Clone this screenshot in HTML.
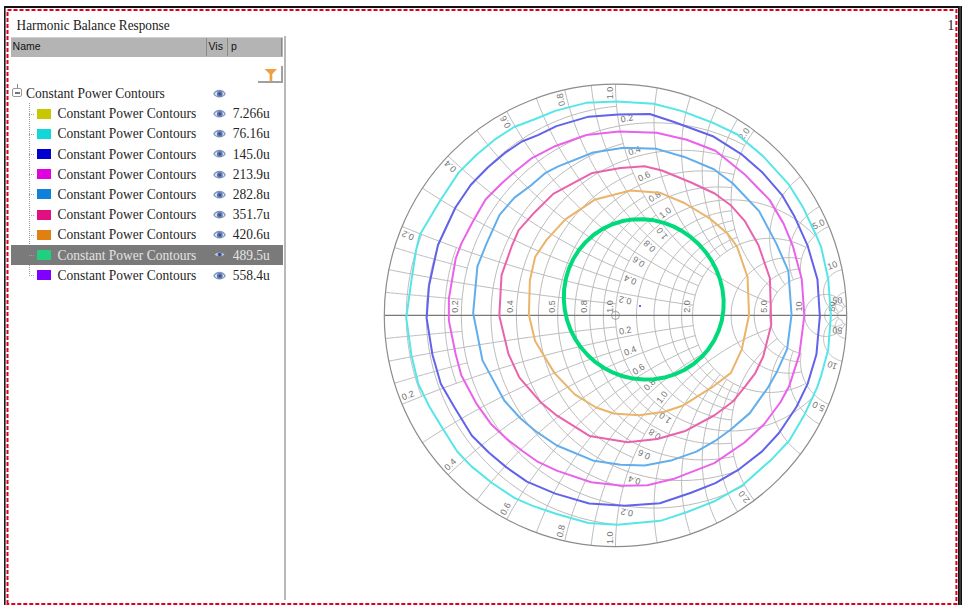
<!DOCTYPE html>
<html><head><meta charset="utf-8"><style>
html,body{margin:0;padding:0;background:#fff;width:968px;height:609px;overflow:hidden;position:relative}
.t{position:absolute;font-family:"Liberation Serif",serif;font-size:13.5px;line-height:17px;white-space:nowrap;transform:scaleY(1.15);transform-origin:0 5.6px}
</style></head><body>
<svg style="position:absolute;left:0;top:0" width="968" height="609"><rect x="4" y="6" width="958" height="2" fill="#111"/><rect x="4" y="6" width="1.6" height="599" fill="#1a1a1a"/><rect x="958" y="6" width="4" height="599" fill="#111"/><rect x="959.6" y="6" width="0.9" height="599" fill="#666"/><path d="M7.5,604 L7.5,10 L956.4,10 L956.4,604 Z" fill="none" stroke="#e0001c" stroke-width="2" stroke-dasharray="4 2"/></svg>
<div class="t" style="left:16.6px;top:15.7px;font-size:13.25px;color:#1a1a1a">Harmonic Balance Response</div>
<div class="t" style="left:947.5px;top:15.5px;font-size:13.5px;color:#1a1a1a">1</div>
<div style="position:absolute;left:11px;top:37px;width:272px;height:20px;background:#b4b4b4;border-top:1px solid #d0d0d0;box-sizing:border-box"></div>
<div style="position:absolute;left:206px;top:38px;width:1px;height:18px;background:#8a8a8a"></div>
<div style="position:absolute;left:227px;top:38px;width:1px;height:18px;background:#8a8a8a"></div>
<div style="position:absolute;left:281px;top:38px;width:1px;height:18px;background:#8a8a8a"></div>
<div style="position:absolute;left:12.6px;top:40px;font-family:'Liberation Sans',sans-serif;font-size:10.5px;line-height:13px;color:#111">Name</div>
<div style="position:absolute;left:208.5px;top:40px;font-family:'Liberation Sans',sans-serif;font-size:10.5px;line-height:13px;color:#111">Vis</div>
<div style="position:absolute;left:231px;top:40px;font-family:'Liberation Sans',sans-serif;font-size:10.5px;line-height:13px;color:#111">p</div>
<div style="position:absolute;left:284px;top:36px;width:1.5px;height:564px;background:#b8b8b8"></div>
<div style="position:absolute;left:258px;top:81px;width:24.5px;height:2px;background:#a0a0a0"></div>
<div style="position:absolute;left:280.5px;top:66px;width:2px;height:17px;background:#a0a0a0"></div>
<svg style="position:absolute;left:264px;top:68px" width="14" height="14" viewBox="0 0 14 14"><path d="M0.5,1 L13,1 L8.3,6 L8.3,13 L5.6,13 L5.6,6 Z" fill="#f0a040"/></svg>
<div style="position:absolute;left:17px;top:84px;width:0;height:4px;border-left:1px solid #888"></div>
<div style="position:absolute;left:12px;top:88.3px;width:9.5px;height:9.2px;border:1px solid #999;border-radius:2px;box-sizing:border-box"></div>
<div style="position:absolute;left:14.5px;top:92.4px;width:5px;height:1.2px;background:#777"></div>
<svg style="position:absolute;left:29px;top:103px" width="1" height="173"><line x1="0.5" y1="0" x2="0.5" y2="173" stroke="#9a9a9a" stroke-width="1" stroke-dasharray="1 1"/></svg>
<div class="t" style="left:26px;top:84.2px;color:#262626">Constant Power Contours</div>
<div style="position:absolute;left:213px;top:88.8px;line-height:0"><svg width="13" height="9" viewBox="0 0 13 9"><path d="M0.2,5 C2.5,-0.6 10.5,-0.6 12.8,5 C10.5,9.6 2.5,9.6 0.2,5 Z" fill="#8196c2"/><path d="M1.6,5 C3.5,1.4 9.5,1.4 11.4,5 C9.5,8.2 3.5,8.2 1.6,5 Z" fill="#e2e8f2"/><circle cx="6.8" cy="4.9" r="2.9" fill="#6078b0"/><circle cx="6.8" cy="5" r="1.3" fill="#34508a"/></svg></div>
<svg style="position:absolute;left:29px;top:113.5px" width="6" height="1"><line x1="0" y1="0.5" x2="6" y2="0.5" stroke="#a0a0a0" stroke-width="1" stroke-dasharray="1 1"/></svg><div style="position:absolute;left:37px;top:108.5px;width:14px;height:10px;background:#c8c800"></div><div class="t" style="left:57.4px;top:104.2px;color:#262626">Constant Power Contours</div><div style="position:absolute;left:213px;top:109.0px;line-height:0"><svg width="13" height="9" viewBox="0 0 13 9"><path d="M0.2,5 C2.5,-0.6 10.5,-0.6 12.8,5 C10.5,9.6 2.5,9.6 0.2,5 Z" fill="#8196c2"/><path d="M1.6,5 C3.5,1.4 9.5,1.4 11.4,5 C9.5,8.2 3.5,8.2 1.6,5 Z" fill="#e2e8f2"/><circle cx="6.8" cy="4.9" r="2.9" fill="#6078b0"/><circle cx="6.8" cy="5" r="1.3" fill="#34508a"/></svg></div><div class="t" style="left:232.7px;top:104.2px;color:#262626">7.266u</div><svg style="position:absolute;left:29px;top:133.7px" width="6" height="1"><line x1="0" y1="0.5" x2="6" y2="0.5" stroke="#a0a0a0" stroke-width="1" stroke-dasharray="1 1"/></svg><div style="position:absolute;left:37px;top:128.7px;width:14px;height:10px;background:#10d8d8"></div><div class="t" style="left:57.4px;top:124.4px;color:#262626">Constant Power Contours</div><div style="position:absolute;left:213px;top:129.2px;line-height:0"><svg width="13" height="9" viewBox="0 0 13 9"><path d="M0.2,5 C2.5,-0.6 10.5,-0.6 12.8,5 C10.5,9.6 2.5,9.6 0.2,5 Z" fill="#8196c2"/><path d="M1.6,5 C3.5,1.4 9.5,1.4 11.4,5 C9.5,8.2 3.5,8.2 1.6,5 Z" fill="#e2e8f2"/><circle cx="6.8" cy="4.9" r="2.9" fill="#6078b0"/><circle cx="6.8" cy="5" r="1.3" fill="#34508a"/></svg></div><div class="t" style="left:232.7px;top:124.4px;color:#262626">76.16u</div><svg style="position:absolute;left:29px;top:153.9px" width="6" height="1"><line x1="0" y1="0.5" x2="6" y2="0.5" stroke="#a0a0a0" stroke-width="1" stroke-dasharray="1 1"/></svg><div style="position:absolute;left:37px;top:148.9px;width:14px;height:10px;background:#0000d0"></div><div class="t" style="left:57.4px;top:144.6px;color:#262626">Constant Power Contours</div><div style="position:absolute;left:213px;top:149.4px;line-height:0"><svg width="13" height="9" viewBox="0 0 13 9"><path d="M0.2,5 C2.5,-0.6 10.5,-0.6 12.8,5 C10.5,9.6 2.5,9.6 0.2,5 Z" fill="#8196c2"/><path d="M1.6,5 C3.5,1.4 9.5,1.4 11.4,5 C9.5,8.2 3.5,8.2 1.6,5 Z" fill="#e2e8f2"/><circle cx="6.8" cy="4.9" r="2.9" fill="#6078b0"/><circle cx="6.8" cy="5" r="1.3" fill="#34508a"/></svg></div><div class="t" style="left:232.7px;top:144.6px;color:#262626">145.0u</div><svg style="position:absolute;left:29px;top:174.1px" width="6" height="1"><line x1="0" y1="0.5" x2="6" y2="0.5" stroke="#a0a0a0" stroke-width="1" stroke-dasharray="1 1"/></svg><div style="position:absolute;left:37px;top:169.1px;width:14px;height:10px;background:#e000e0"></div><div class="t" style="left:57.4px;top:164.8px;color:#262626">Constant Power Contours</div><div style="position:absolute;left:213px;top:169.6px;line-height:0"><svg width="13" height="9" viewBox="0 0 13 9"><path d="M0.2,5 C2.5,-0.6 10.5,-0.6 12.8,5 C10.5,9.6 2.5,9.6 0.2,5 Z" fill="#8196c2"/><path d="M1.6,5 C3.5,1.4 9.5,1.4 11.4,5 C9.5,8.2 3.5,8.2 1.6,5 Z" fill="#e2e8f2"/><circle cx="6.8" cy="4.9" r="2.9" fill="#6078b0"/><circle cx="6.8" cy="5" r="1.3" fill="#34508a"/></svg></div><div class="t" style="left:232.7px;top:164.8px;color:#262626">213.9u</div><svg style="position:absolute;left:29px;top:194.3px" width="6" height="1"><line x1="0" y1="0.5" x2="6" y2="0.5" stroke="#a0a0a0" stroke-width="1" stroke-dasharray="1 1"/></svg><div style="position:absolute;left:37px;top:189.3px;width:14px;height:10px;background:#1080d8"></div><div class="t" style="left:57.4px;top:185.0px;color:#262626">Constant Power Contours</div><div style="position:absolute;left:213px;top:189.8px;line-height:0"><svg width="13" height="9" viewBox="0 0 13 9"><path d="M0.2,5 C2.5,-0.6 10.5,-0.6 12.8,5 C10.5,9.6 2.5,9.6 0.2,5 Z" fill="#8196c2"/><path d="M1.6,5 C3.5,1.4 9.5,1.4 11.4,5 C9.5,8.2 3.5,8.2 1.6,5 Z" fill="#e2e8f2"/><circle cx="6.8" cy="4.9" r="2.9" fill="#6078b0"/><circle cx="6.8" cy="5" r="1.3" fill="#34508a"/></svg></div><div class="t" style="left:232.7px;top:185.0px;color:#262626">282.8u</div><svg style="position:absolute;left:29px;top:214.5px" width="6" height="1"><line x1="0" y1="0.5" x2="6" y2="0.5" stroke="#a0a0a0" stroke-width="1" stroke-dasharray="1 1"/></svg><div style="position:absolute;left:37px;top:209.5px;width:14px;height:10px;background:#e01080"></div><div class="t" style="left:57.4px;top:205.2px;color:#262626">Constant Power Contours</div><div style="position:absolute;left:213px;top:210.0px;line-height:0"><svg width="13" height="9" viewBox="0 0 13 9"><path d="M0.2,5 C2.5,-0.6 10.5,-0.6 12.8,5 C10.5,9.6 2.5,9.6 0.2,5 Z" fill="#8196c2"/><path d="M1.6,5 C3.5,1.4 9.5,1.4 11.4,5 C9.5,8.2 3.5,8.2 1.6,5 Z" fill="#e2e8f2"/><circle cx="6.8" cy="4.9" r="2.9" fill="#6078b0"/><circle cx="6.8" cy="5" r="1.3" fill="#34508a"/></svg></div><div class="t" style="left:232.7px;top:205.2px;color:#262626">351.7u</div><svg style="position:absolute;left:29px;top:234.7px" width="6" height="1"><line x1="0" y1="0.5" x2="6" y2="0.5" stroke="#a0a0a0" stroke-width="1" stroke-dasharray="1 1"/></svg><div style="position:absolute;left:37px;top:229.7px;width:14px;height:10px;background:#e08010"></div><div class="t" style="left:57.4px;top:225.4px;color:#262626">Constant Power Contours</div><div style="position:absolute;left:213px;top:230.2px;line-height:0"><svg width="13" height="9" viewBox="0 0 13 9"><path d="M0.2,5 C2.5,-0.6 10.5,-0.6 12.8,5 C10.5,9.6 2.5,9.6 0.2,5 Z" fill="#8196c2"/><path d="M1.6,5 C3.5,1.4 9.5,1.4 11.4,5 C9.5,8.2 3.5,8.2 1.6,5 Z" fill="#e2e8f2"/><circle cx="6.8" cy="4.9" r="2.9" fill="#6078b0"/><circle cx="6.8" cy="5" r="1.3" fill="#34508a"/></svg></div><div class="t" style="left:232.7px;top:225.4px;color:#262626">420.6u</div><div style="position:absolute;left:11px;top:245.4px;width:272px;height:19.6px;background:#7a7a7a"></div><svg style="position:absolute;left:29px;top:254.9px" width="6" height="1"><line x1="0" y1="0.5" x2="6" y2="0.5" stroke="#a0a0a0" stroke-width="1" stroke-dasharray="1 1"/></svg><div style="position:absolute;left:37px;top:249.9px;width:14px;height:10px;background:#20d080"></div><div class="t" style="left:57.4px;top:245.6px;color:#e4e4e4">Constant Power Contours</div><div style="position:absolute;left:213px;top:250.4px;line-height:0"><svg width="13" height="9" viewBox="0 0 13 9"><path d="M1.5,4.6 Q6.5,0.6 11.5,4.6 Q6.5,8.6 1.5,4.6 Z" fill="#c9d2e2"/><circle cx="6.7" cy="4.6" r="2.2" fill="#4c68a8"/><circle cx="6.7" cy="4.6" r="1" fill="#2c4680"/></svg></div><div class="t" style="left:232.7px;top:245.6px;color:#e4e4e4">489.5u</div><svg style="position:absolute;left:29px;top:275.1px" width="6" height="1"><line x1="0" y1="0.5" x2="6" y2="0.5" stroke="#a0a0a0" stroke-width="1" stroke-dasharray="1 1"/></svg><div style="position:absolute;left:37px;top:270.1px;width:14px;height:10px;background:#8000ff"></div><div class="t" style="left:57.4px;top:265.8px;color:#262626">Constant Power Contours</div><div style="position:absolute;left:213px;top:270.6px;line-height:0"><svg width="13" height="9" viewBox="0 0 13 9"><path d="M0.2,5 C2.5,-0.6 10.5,-0.6 12.8,5 C10.5,9.6 2.5,9.6 0.2,5 Z" fill="#8196c2"/><path d="M1.6,5 C3.5,1.4 9.5,1.4 11.4,5 C9.5,8.2 3.5,8.2 1.6,5 Z" fill="#e2e8f2"/><circle cx="6.8" cy="4.9" r="2.9" fill="#6078b0"/><circle cx="6.8" cy="5" r="1.3" fill="#34508a"/></svg></div><div class="t" style="left:232.7px;top:265.8px;color:#262626">558.4u</div>
<svg width="968" height="609" viewBox="0 0 968 609" style="position:absolute;left:0;top:0">
<g fill="none" stroke="#bcbcbc" stroke-width="1"><path d="M421.74,234.45 L420.98,236.39 L420.25,238.32 L419.53,240.27 L418.84,242.22 L418.16,244.18 L417.50,246.14 L416.85,248.11 L416.23,250.09 L415.62,252.07 L415.04,254.06 L414.47,256.05 L413.92,258.05 L413.39,260.05 L412.88,262.06 L412.39,264.07 L411.91,266.09 L411.46,268.11 L411.02,270.14 L410.61,272.17 L410.21,274.20 L409.83,276.24 L409.47,278.28 L409.13,280.32 L408.81,282.37 L408.51,284.42 L408.23,286.47 L407.96,288.53 L407.72,290.59 L407.50,292.65 L407.29,294.71 L407.11,296.77 L406.94,298.84 L406.80,300.90 L406.67,302.97 L406.56,305.04 L406.48,307.11 L406.41,309.18 L406.36,311.26 L406.33,313.33 L406.32,315.40 L406.33,317.47 L406.36,319.54 L406.41,321.62 L406.48,323.69 L406.56,325.76 L406.67,327.83 L406.80,329.90 L406.94,331.96 L407.11,334.03 L407.29,336.09 L407.50,338.15 L407.72,340.21 L407.96,342.27 L408.23,344.33 L408.51,346.38 L408.81,348.43 L409.13,350.48 L409.47,352.52 L409.83,354.56 L410.21,356.60 L410.61,358.63 L411.02,360.66 L411.46,362.69 L411.91,364.71 L412.39,366.73 L412.88,368.74 L413.39,370.75 L413.92,372.75 L414.47,374.75 L415.04,376.74 L415.62,378.73 L416.23,380.71 L416.85,382.69 L417.50,384.66 L418.16,386.62 L418.84,388.58 L419.53,390.53 L420.25,392.48 L420.98,394.41 L421.74,396.35"/><path d="M385.45,292.34 L386.73,292.47 L388.00,292.59 L389.28,292.72 L390.55,292.85 L391.83,292.97 L393.11,293.10 L394.38,293.22 L395.66,293.35 L396.93,293.47 L398.21,293.60 L399.48,293.72 L400.76,293.85 L402.04,293.97 L403.31,294.09 L404.59,294.22 L405.86,294.34 L407.14,294.46 L408.42,294.58 L409.69,294.70 L410.97,294.82 L412.24,294.94 L413.52,295.06 L414.80,295.18 L416.07,295.30 L417.35,295.42 L418.62,295.54 L419.90,295.66 L421.18,295.78 L422.45,295.90 L423.73,296.01 L425.01,296.13 L426.28,296.25 L427.56,296.36 L428.83,296.48 L430.11,296.60 L431.39,296.71 L432.66,296.83 L433.94,296.94 L435.22,297.06 L436.49,297.17 L437.77,297.28 L439.05,297.40 L440.32,297.51 L441.60,297.62 L442.88,297.73 L444.16,297.84 L445.43,297.96 L446.71,298.07 L447.99,298.18 L449.26,298.29 L450.54,298.40 L451.82,298.51 L453.09,298.62 L454.37,298.73 L455.65,298.83 L456.93,298.94 L458.20,299.05 L459.48,299.16 L460.76,299.27 L462.03,299.37"/><path d="M385.45,338.46 L386.73,338.33 L388.00,338.21 L389.28,338.08 L390.55,337.95 L391.83,337.83 L393.11,337.70 L394.38,337.58 L395.66,337.45 L396.93,337.33 L398.21,337.20 L399.48,337.08 L400.76,336.95 L402.04,336.83 L403.31,336.71 L404.59,336.58 L405.86,336.46 L407.14,336.34 L408.42,336.22 L409.69,336.10 L410.97,335.98 L412.24,335.86 L413.52,335.74 L414.80,335.62 L416.07,335.50 L417.35,335.38 L418.62,335.26 L419.90,335.14 L421.18,335.02 L422.45,334.90 L423.73,334.79 L425.01,334.67 L426.28,334.55 L427.56,334.44 L428.83,334.32 L430.11,334.20 L431.39,334.09 L432.66,333.97 L433.94,333.86 L435.22,333.74 L436.49,333.63 L437.77,333.52 L439.05,333.40 L440.32,333.29 L441.60,333.18 L442.88,333.07 L444.16,332.96 L445.43,332.84 L446.71,332.73 L447.99,332.62 L449.26,332.51 L450.54,332.40 L451.82,332.29 L453.09,332.18 L454.37,332.07 L455.65,331.97 L456.93,331.86 L458.20,331.75 L459.48,331.64 L460.76,331.53 L462.03,331.43"/><path d="M616.55,106.17 L608.84,107.05 L601.18,108.21 L593.56,109.66 L586.00,111.38 L578.51,113.38 L571.10,115.66 L563.78,118.21 L556.55,121.02 L549.44,124.11 L542.44,127.45 L535.57,131.05 L528.84,134.89 L522.26,138.99 L515.83,143.32 L509.57,147.89 L503.47,152.69 L497.56,157.70 L491.84,162.94 L486.32,168.38 L481.00,174.02 L475.89,179.85 L471.00,185.87 L466.33,192.06 L461.90,198.42 L457.70,204.94 L453.75,211.61 L450.05,218.42 L446.60,225.36 L443.41,232.43 L440.48,239.61 L437.82,246.89 L435.42,254.27 L433.31,261.72 L431.46,269.26 L429.90,276.85 L428.62,284.50 L427.62,292.19 L426.91,299.91 L426.48,307.65 L426.34,315.40 L426.48,323.15 L426.91,330.89 L427.62,338.61 L428.62,346.30 L429.90,353.95 L431.46,361.54 L433.31,369.08 L435.42,376.53 L437.82,383.91 L440.48,391.19 L443.41,398.37 L446.60,405.44 L450.05,412.38 L453.75,419.19 L457.70,425.86 L461.90,432.38 L466.33,438.74 L471.00,444.93 L475.89,450.95 L481.00,456.78 L486.32,462.42 L491.84,467.86 L497.56,473.10 L503.47,478.11 L509.57,482.91 L515.83,487.48 L522.26,491.81 L528.84,495.91 L535.57,499.75 L542.44,503.35 L549.44,506.69 L556.55,509.78 L563.78,512.59 L571.10,515.14 L578.51,517.42 L586.00,519.42 L593.56,521.14 L601.18,522.59 L608.84,523.75 L616.55,524.63"/><path d="M388.88,269.62 L392.63,270.37 L396.39,271.12 L400.15,271.87 L403.91,272.60 L407.67,273.33 L411.43,274.06 L415.19,274.78 L418.96,275.49 L422.72,276.19 L426.49,276.89 L430.26,277.59 L434.03,278.27 L437.80,278.95 L441.57,279.63 L445.34,280.30 L449.11,280.96 L452.89,281.61 L456.66,282.26 L460.44,282.91 L464.22,283.54 L468.00,284.17 L471.78,284.80 L475.56,285.42 L479.34,286.03 L483.12,286.63 L486.91,287.23 L490.69,287.83 L494.48,288.41 L498.26,288.99 L502.05,289.57 L505.84,290.14 L509.63,290.70 L513.42,291.25 L517.21,291.80 L521.00,292.34 L524.80,292.88 L528.59,293.41 L532.39,293.94 L536.18,294.45 L539.98,294.96 L543.78,295.47 L547.58,295.97 L551.37,296.46 L555.17,296.95 L558.98,297.43 L562.78,297.90 L566.58,298.37 L570.38,298.83 L574.19,299.28 L577.99,299.73 L581.80,300.17 L585.60,300.61 L589.41,301.04 L593.22,301.46 L597.03,301.88 L600.83,302.29 L604.64,302.69 L608.45,303.09 L612.26,303.48 L616.08,303.87"/><path d="M388.88,361.18 L392.63,360.43 L396.39,359.68 L400.15,358.93 L403.91,358.20 L407.67,357.47 L411.43,356.74 L415.19,356.02 L418.96,355.31 L422.72,354.61 L426.49,353.91 L430.26,353.21 L434.03,352.53 L437.80,351.85 L441.57,351.17 L445.34,350.50 L449.11,349.84 L452.89,349.19 L456.66,348.54 L460.44,347.89 L464.22,347.26 L468.00,346.63 L471.78,346.00 L475.56,345.38 L479.34,344.77 L483.12,344.17 L486.91,343.57 L490.69,342.97 L494.48,342.39 L498.26,341.81 L502.05,341.23 L505.84,340.66 L509.63,340.10 L513.42,339.55 L517.21,339.00 L521.00,338.46 L524.80,337.92 L528.59,337.39 L532.39,336.86 L536.18,336.35 L539.98,335.84 L543.78,335.33 L547.58,334.83 L551.37,334.34 L555.17,333.85 L558.98,333.37 L562.78,332.90 L566.58,332.43 L570.38,331.97 L574.19,331.52 L577.99,331.07 L581.80,330.63 L585.60,330.19 L589.41,329.76 L593.22,329.34 L597.03,328.92 L600.83,328.51 L604.64,328.11 L608.45,327.71 L612.26,327.32 L616.08,326.93"/><path d="M456.42,247.52 L455.84,249.16 L455.28,250.79 L454.73,252.43 L454.19,254.08 L453.67,255.73 L453.17,257.39 L452.67,259.05 L452.19,260.71 L451.73,262.38 L451.28,264.05 L450.85,265.72 L450.43,267.40 L450.02,269.09 L449.63,270.77 L449.25,272.46 L448.89,274.15 L448.54,275.85 L448.21,277.55 L447.89,279.25 L447.59,280.95 L447.30,282.66 L447.02,284.37 L446.76,286.08 L446.52,287.79 L446.29,289.51 L446.07,291.23 L445.87,292.95 L445.69,294.67 L445.51,296.39 L445.36,298.11 L445.22,299.84 L445.09,301.56 L444.98,303.29 L444.88,305.02 L444.80,306.75 L444.73,308.48 L444.68,310.21 L444.64,311.94 L444.62,313.67 L444.61,315.40 L444.62,317.13 L444.64,318.86 L444.68,320.59 L444.73,322.32 L444.80,324.05 L444.88,325.78 L444.98,327.51 L445.09,329.24 L445.22,330.96 L445.36,332.69 L445.51,334.41 L445.69,336.13 L445.87,337.85 L446.07,339.57 L446.29,341.29 L446.52,343.01 L446.76,344.72 L447.02,346.43 L447.30,348.14 L447.59,349.85 L447.89,351.55 L448.21,353.25 L448.54,354.95 L448.89,356.65 L449.25,358.34 L449.63,360.03 L450.02,361.71 L450.43,363.40 L450.85,365.08 L451.28,366.75 L451.73,368.42 L452.19,370.09 L452.67,371.75 L453.17,373.41 L453.67,375.07 L454.19,376.72 L454.73,378.37 L455.28,380.01 L455.84,381.64 L456.42,383.28"/><path d="M394.48,247.57 L395.68,247.94 L396.89,248.30 L398.09,248.67 L399.30,249.04 L400.50,249.40 L401.71,249.77 L402.92,250.13 L404.13,250.49 L405.33,250.85 L406.54,251.22 L407.75,251.57 L408.96,251.93 L410.17,252.29 L411.38,252.65 L412.58,253.00 L413.79,253.36 L415.00,253.71 L416.21,254.06 L417.43,254.42 L418.64,254.77 L419.85,255.12 L421.06,255.46 L422.27,255.81 L423.48,256.16 L424.69,256.50 L425.91,256.85 L427.12,257.19 L428.33,257.53 L429.55,257.88 L430.76,258.22 L431.97,258.56 L433.19,258.90 L434.40,259.23 L435.62,259.57 L436.83,259.91 L438.05,260.24 L439.26,260.57 L440.48,260.91 L441.70,261.24 L442.91,261.57 L444.13,261.90 L445.35,262.23 L446.56,262.56 L447.78,262.88 L449.00,263.21 L450.22,263.53 L451.43,263.86 L452.65,264.18 L453.87,264.50 L455.09,264.82 L456.31,265.14 L457.53,265.46 L458.75,265.78 L459.97,266.09 L461.19,266.41 L462.41,266.73 L463.63,267.04 L464.85,267.35 L466.07,267.66 L467.29,267.97"/><path d="M394.48,383.23 L395.68,382.86 L396.89,382.50 L398.09,382.13 L399.30,381.76 L400.50,381.40 L401.71,381.03 L402.92,380.67 L404.13,380.31 L405.33,379.95 L406.54,379.58 L407.75,379.23 L408.96,378.87 L410.17,378.51 L411.38,378.15 L412.58,377.80 L413.79,377.44 L415.00,377.09 L416.21,376.74 L417.43,376.38 L418.64,376.03 L419.85,375.68 L421.06,375.34 L422.27,374.99 L423.48,374.64 L424.69,374.30 L425.91,373.95 L427.12,373.61 L428.33,373.27 L429.55,372.92 L430.76,372.58 L431.97,372.24 L433.19,371.90 L434.40,371.57 L435.62,371.23 L436.83,370.89 L438.05,370.56 L439.26,370.23 L440.48,369.89 L441.70,369.56 L442.91,369.23 L444.13,368.90 L445.35,368.57 L446.56,368.24 L447.78,367.92 L449.00,367.59 L450.22,367.27 L451.43,366.94 L452.65,366.62 L453.87,366.30 L455.09,365.98 L456.31,365.66 L457.53,365.34 L458.75,365.02 L459.97,364.71 L461.19,364.39 L462.41,364.07 L463.63,363.76 L464.85,363.45 L466.07,363.14 L467.29,362.83"/><path d="M744.70,145.40 L735.83,140.96 L726.73,136.98 L717.45,133.47 L708.00,130.44 L698.40,127.91 L688.69,125.88 L678.88,124.34 L669.01,123.32 L659.10,122.80 L649.17,122.79 L639.26,123.30 L629.39,124.32 L619.58,125.84 L609.86,127.86 L600.27,130.39 L590.81,133.40 L581.52,136.90 L572.43,140.87 L563.55,145.30 L554.91,150.19 L546.53,155.51 L538.44,161.26 L530.66,167.42 L523.20,173.97 L516.09,180.89 L509.35,188.18 L502.99,195.80 L497.03,203.73 L491.49,211.97 L486.37,220.47 L481.71,229.23 L477.50,238.22 L473.76,247.41 L470.50,256.79 L467.72,266.32 L465.44,275.98 L463.66,285.74 L462.39,295.58 L461.62,305.48 L461.37,315.40 L461.62,325.32 L462.39,335.22 L463.66,345.06 L465.44,354.82 L467.72,364.48 L470.50,374.01 L473.76,383.39 L477.50,392.58 L481.71,401.57 L486.37,410.33 L491.49,418.83 L497.03,427.07 L502.99,435.00 L509.35,442.62 L516.09,449.91 L523.20,456.83 L530.66,463.38 L538.44,469.54 L546.53,475.29 L554.91,480.61 L563.55,485.50 L572.43,489.93 L581.52,493.90 L590.81,497.40 L600.27,500.41 L609.86,502.94 L619.58,504.96 L629.39,506.48 L639.26,507.50 L649.17,508.01 L659.10,508.00 L669.01,507.48 L678.88,506.46 L688.69,504.92 L698.40,502.89 L708.00,500.36 L717.45,497.33 L726.73,493.82 L735.83,489.84 L744.70,485.40"/><path d="M402.08,226.48 L406.74,228.41 L411.41,230.31 L416.08,232.20 L420.77,234.07 L425.46,235.92 L430.15,237.74 L434.86,239.55 L439.58,241.34 L444.30,243.10 L449.03,244.85 L453.76,246.57 L458.51,248.27 L463.26,249.96 L468.02,251.62 L472.79,253.26 L477.56,254.88 L482.34,256.48 L487.13,258.06 L491.92,259.61 L496.73,261.15 L501.53,262.67 L506.35,264.16 L511.17,265.63 L516.00,267.09 L520.83,268.52 L525.67,269.93 L530.52,271.32 L535.37,272.69 L540.23,274.03 L545.09,275.36 L549.96,276.66 L554.83,277.95 L559.71,279.21 L564.60,280.45 L569.49,281.67 L574.39,282.87 L579.29,284.05 L584.20,285.20 L589.11,286.34 L594.03,287.45 L598.95,288.54 L603.87,289.61 L608.81,290.66 L613.74,291.68 L618.68,292.69 L623.63,293.67 L628.57,294.63 L633.53,295.57 L638.48,296.49 L643.44,297.39 L648.41,298.27 L653.38,299.12 L658.35,299.95 L663.33,300.76 L668.30,301.55 L673.29,302.32 L678.27,303.06 L683.26,303.79 L688.25,304.49 L693.25,305.17"/><path d="M402.08,404.32 L406.74,402.39 L411.41,400.49 L416.08,398.60 L420.77,396.73 L425.46,394.88 L430.15,393.06 L434.86,391.25 L439.58,389.46 L444.30,387.70 L449.03,385.95 L453.76,384.23 L458.51,382.53 L463.26,380.84 L468.02,379.18 L472.79,377.54 L477.56,375.92 L482.34,374.32 L487.13,372.74 L491.92,371.19 L496.73,369.65 L501.53,368.13 L506.35,366.64 L511.17,365.17 L516.00,363.71 L520.83,362.28 L525.67,360.87 L530.52,359.48 L535.37,358.11 L540.23,356.77 L545.09,355.44 L549.96,354.14 L554.83,352.85 L559.71,351.59 L564.60,350.35 L569.49,349.13 L574.39,347.93 L579.29,346.75 L584.20,345.60 L589.11,344.46 L594.03,343.35 L598.95,342.26 L603.87,341.19 L608.81,340.14 L613.74,339.12 L618.68,338.11 L623.63,337.13 L628.57,336.17 L633.53,335.23 L638.48,334.31 L643.44,333.41 L648.41,332.53 L653.38,331.68 L658.35,330.85 L663.33,330.04 L668.30,329.25 L673.29,328.48 L678.27,327.74 L683.26,327.01 L688.25,326.31 L693.25,325.63"/><path d="M623.24,143.50 L617.63,145.09 L612.07,146.86 L606.58,148.81 L601.15,150.95 L595.80,153.25 L590.52,155.73 L585.33,158.39 L580.23,161.21 L575.22,164.20 L570.31,167.35 L565.51,170.66 L560.82,174.12 L556.25,177.74 L551.80,181.51 L547.47,185.41 L543.28,189.46 L539.22,193.65 L535.30,197.96 L531.52,202.40 L527.89,206.97 L524.41,211.64 L521.09,216.43 L517.92,221.33 L514.92,226.33 L512.08,231.42 L509.41,236.61 L506.92,241.88 L504.59,247.22 L502.45,252.64 L500.48,258.13 L498.69,263.68 L497.09,269.29 L495.67,274.94 L494.44,280.64 L493.39,286.38 L492.53,292.14 L491.87,297.94 L491.39,303.75 L491.10,309.57 L491.01,315.40 L491.10,321.23 L491.39,327.05 L491.87,332.86 L492.53,338.66 L493.39,344.42 L494.44,350.16 L495.67,355.86 L497.09,361.51 L498.69,367.12 L500.48,372.67 L502.45,378.16 L504.59,383.58 L506.92,388.92 L509.41,394.19 L512.08,399.38 L514.92,404.47 L517.92,409.47 L521.09,414.37 L524.41,419.16 L527.89,423.83 L531.52,428.40 L535.30,432.84 L539.22,437.15 L543.28,441.34 L547.47,445.39 L551.80,449.29 L556.25,453.06 L560.82,456.68 L565.51,460.14 L570.31,463.45 L575.22,466.60 L580.23,469.59 L585.33,472.41 L590.52,475.07 L595.80,477.55 L601.15,479.85 L606.58,481.99 L612.07,483.94 L617.63,485.71 L623.24,487.30"/><path d="M422.48,188.13 L425.54,190.14 L428.61,192.14 L431.70,194.12 L434.79,196.08 L437.89,198.03 L441.00,199.97 L444.11,201.89 L447.24,203.79 L450.38,205.68 L453.52,207.56 L456.68,209.42 L459.84,211.27 L463.01,213.10 L466.19,214.91 L469.38,216.71 L472.58,218.50 L475.79,220.27 L479.00,222.03 L482.22,223.76 L485.45,225.49 L488.69,227.20 L491.94,228.89 L495.20,230.57 L498.46,232.23 L501.73,233.88 L505.01,235.51 L508.30,237.13 L511.59,238.73 L514.89,240.31 L518.20,241.88 L521.52,243.43 L524.84,244.97 L528.17,246.49 L531.51,248.00 L534.86,249.49 L538.21,250.96 L541.57,252.42 L544.94,253.86 L548.31,255.29 L551.69,256.70 L555.08,258.09 L558.47,259.47 L561.87,260.83 L565.28,262.18 L568.69,263.51 L572.11,264.82 L575.53,266.12 L578.96,267.40 L582.40,268.66 L585.84,269.91 L589.29,271.14 L592.75,272.36 L596.21,273.56 L599.68,274.74 L603.15,275.90 L606.62,277.05 L610.11,278.18 L613.60,279.30 L617.09,280.40 L620.59,281.48"/><path d="M422.48,442.67 L425.54,440.66 L428.61,438.66 L431.70,436.68 L434.79,434.72 L437.89,432.77 L441.00,430.83 L444.11,428.91 L447.24,427.01 L450.38,425.12 L453.52,423.24 L456.68,421.38 L459.84,419.53 L463.01,417.70 L466.19,415.89 L469.38,414.09 L472.58,412.30 L475.79,410.53 L479.00,408.77 L482.22,407.04 L485.45,405.31 L488.69,403.60 L491.94,401.91 L495.20,400.23 L498.46,398.57 L501.73,396.92 L505.01,395.29 L508.30,393.67 L511.59,392.07 L514.89,390.49 L518.20,388.92 L521.52,387.37 L524.84,385.83 L528.17,384.31 L531.51,382.80 L534.86,381.31 L538.21,379.84 L541.57,378.38 L544.94,376.94 L548.31,375.51 L551.69,374.10 L555.08,372.71 L558.47,371.33 L561.87,369.97 L565.28,368.62 L568.69,367.29 L572.11,365.98 L575.53,364.68 L578.96,363.40 L582.40,362.14 L585.84,360.89 L589.29,359.66 L592.75,358.44 L596.21,357.24 L599.68,356.06 L603.15,354.90 L606.62,353.75 L610.11,352.62 L613.60,351.50 L617.09,350.40 L620.59,349.32"/><path d="M738.08,160.23 L730.57,157.70 L722.95,155.53 L715.23,153.73 L707.43,152.30 L699.58,151.24 L691.68,150.57 L683.76,150.27 L675.83,150.36 L667.92,150.82 L660.04,151.67 L652.20,152.89 L644.44,154.48 L636.76,156.45 L629.18,158.78 L621.73,161.48 L614.41,164.52 L607.25,167.92 L600.26,171.65 L593.45,175.72 L586.85,180.11 L580.47,184.81 L574.32,189.81 L568.42,195.10 L562.78,200.67 L557.41,206.50 L552.33,212.58 L547.54,218.90 L543.06,225.45 L538.91,232.19 L535.08,239.14 L531.59,246.25 L528.44,253.53 L525.65,260.95 L523.22,268.49 L521.15,276.14 L519.45,283.88 L518.12,291.70 L517.17,299.57 L516.60,307.48 L516.41,315.40 L516.60,323.32 L517.17,331.23 L518.12,339.10 L519.45,346.92 L521.15,354.66 L523.22,362.31 L525.65,369.85 L528.44,377.27 L531.59,384.55 L535.08,391.66 L538.91,398.61 L543.06,405.35 L547.54,411.90 L552.33,418.22 L557.41,424.30 L562.78,430.13 L568.42,435.70 L574.32,440.99 L580.47,445.99 L586.85,450.69 L593.45,455.08 L600.26,459.15 L607.25,462.88 L614.41,466.28 L621.73,469.32 L629.18,472.02 L636.76,474.35 L644.44,476.32 L652.20,477.91 L660.04,479.13 L667.92,479.98 L675.83,480.44 L683.76,480.53 L691.68,480.23 L699.58,479.56 L707.43,478.50 L715.23,477.07 L722.95,475.27 L730.57,473.10 L738.08,470.57"/><path d="M448.08,155.95 L451.55,159.23 L455.05,162.48 L458.58,165.71 L462.13,168.90 L465.71,172.06 L469.32,175.20 L472.95,178.30 L476.61,181.38 L480.29,184.42 L483.99,187.43 L487.73,190.41 L491.48,193.37 L495.26,196.29 L499.07,199.18 L502.90,202.03 L506.75,204.86 L510.62,207.65 L514.52,210.41 L518.44,213.14 L522.39,215.84 L526.35,218.50 L530.34,221.14 L534.35,223.73 L538.38,226.30 L542.43,228.83 L546.50,231.33 L550.59,233.79 L554.71,236.22 L558.84,238.62 L562.99,240.98 L567.16,243.31 L571.36,245.60 L575.56,247.86 L579.79,250.08 L584.04,252.27 L588.30,254.43 L592.59,256.54 L596.89,258.63 L601.20,260.67 L605.54,262.68 L609.88,264.66 L614.25,266.60 L618.63,268.50 L623.03,270.37 L627.44,272.20 L631.87,273.99 L636.31,275.75 L640.77,277.47 L645.24,279.15 L649.72,280.80 L654.22,282.41 L658.73,283.98 L663.26,285.52 L667.79,287.02 L672.34,288.47 L676.90,289.90 L681.48,291.28 L686.06,292.63 L690.65,293.94 L695.26,295.21"/><path d="M448.08,474.85 L451.55,471.57 L455.05,468.32 L458.58,465.09 L462.13,461.90 L465.71,458.74 L469.32,455.60 L472.95,452.50 L476.61,449.42 L480.29,446.38 L483.99,443.37 L487.73,440.39 L491.48,437.43 L495.26,434.51 L499.07,431.62 L502.90,428.77 L506.75,425.94 L510.62,423.15 L514.52,420.39 L518.44,417.66 L522.39,414.96 L526.35,412.30 L530.34,409.66 L534.35,407.07 L538.38,404.50 L542.43,401.97 L546.50,399.47 L550.59,397.01 L554.71,394.58 L558.84,392.18 L562.99,389.82 L567.16,387.49 L571.36,385.20 L575.56,382.94 L579.79,380.72 L584.04,378.53 L588.30,376.37 L592.59,374.26 L596.89,372.17 L601.20,370.13 L605.54,368.12 L609.88,366.14 L614.25,364.20 L618.63,362.30 L623.03,360.43 L627.44,358.60 L631.87,356.81 L636.31,355.05 L640.77,353.33 L645.24,351.65 L649.72,350.00 L654.22,348.39 L658.73,346.82 L663.26,345.28 L667.79,343.78 L672.34,342.33 L676.90,340.90 L681.48,339.52 L686.06,338.17 L690.65,336.86 L695.26,335.59"/><path d="M633.28,173.12 L629.13,174.93 L625.03,176.85 L620.98,178.90 L617.00,181.06 L613.08,183.34 L609.24,185.73 L605.46,188.24 L601.76,190.86 L598.14,193.58 L594.60,196.41 L591.14,199.34 L587.78,202.37 L584.50,205.50 L581.31,208.72 L578.23,212.04 L575.24,215.45 L572.35,218.94 L569.57,222.51 L566.89,226.17 L564.32,229.90 L561.86,233.71 L559.52,237.59 L557.29,241.53 L555.17,245.54 L553.18,249.61 L551.31,253.73 L549.55,257.91 L547.93,262.14 L546.42,266.42 L545.05,270.73 L543.80,275.09 L542.68,279.48 L541.69,283.90 L540.83,288.35 L540.10,292.82 L539.50,297.32 L539.03,301.82 L538.70,306.34 L538.50,310.87 L538.43,315.40 L538.50,319.93 L538.70,324.46 L539.03,328.98 L539.50,333.48 L540.10,337.98 L540.83,342.45 L541.69,346.90 L542.68,351.32 L543.80,355.71 L545.05,360.07 L546.42,364.38 L547.93,368.66 L549.55,372.89 L551.31,377.07 L553.18,381.19 L555.17,385.26 L557.29,389.27 L559.52,393.21 L561.86,397.09 L564.32,400.90 L566.89,404.63 L569.57,408.29 L572.35,411.86 L575.24,415.35 L578.23,418.76 L581.31,422.08 L584.50,425.30 L587.78,428.43 L591.14,431.46 L594.60,434.39 L598.14,437.22 L601.76,439.94 L605.46,442.56 L609.24,445.07 L613.08,447.46 L617.00,449.74 L620.98,451.90 L625.03,453.95 L629.13,455.87 L633.28,457.68"/><path d="M476.78,130.44 L478.81,133.13 L480.86,135.80 L482.93,138.46 L485.03,141.11 L487.13,143.73 L489.26,146.35 L491.41,148.95 L493.58,151.53 L495.76,154.09 L497.97,156.64 L500.19,159.18 L502.43,161.69 L504.69,164.20 L506.97,166.68 L509.26,169.15 L511.58,171.60 L513.91,174.03 L516.26,176.45 L518.62,178.85 L521.01,181.23 L523.41,183.60 L525.83,185.95 L528.26,188.28 L530.71,190.59 L533.18,192.88 L535.67,195.16 L538.17,197.42 L540.69,199.66 L543.22,201.88 L545.77,204.08 L548.34,206.26 L550.92,208.43 L553.52,210.58 L556.14,212.70 L558.77,214.81 L561.41,216.90 L564.07,218.97 L566.75,221.02 L569.44,223.05 L572.14,225.06 L574.86,227.05 L577.59,229.03 L580.34,230.98 L583.10,232.91 L585.88,234.82 L588.67,236.71 L591.47,238.58 L594.29,240.43 L597.12,242.26 L599.97,244.07 L602.82,245.86 L605.69,247.63 L608.57,249.37 L611.47,251.10 L614.38,252.80 L617.30,254.48 L620.23,256.14 L623.18,257.78 L626.13,259.40 L629.10,261.00"/><path d="M476.78,500.36 L478.81,497.67 L480.86,495.00 L482.93,492.34 L485.03,489.69 L487.13,487.07 L489.26,484.45 L491.41,481.85 L493.58,479.27 L495.76,476.71 L497.97,474.16 L500.19,471.62 L502.43,469.11 L504.69,466.60 L506.97,464.12 L509.26,461.65 L511.58,459.20 L513.91,456.77 L516.26,454.35 L518.62,451.95 L521.01,449.57 L523.41,447.20 L525.83,444.85 L528.26,442.52 L530.71,440.21 L533.18,437.92 L535.67,435.64 L538.17,433.38 L540.69,431.14 L543.22,428.92 L545.77,426.72 L548.34,424.54 L550.92,422.37 L553.52,420.22 L556.14,418.10 L558.77,415.99 L561.41,413.90 L564.07,411.83 L566.75,409.78 L569.44,407.75 L572.14,405.74 L574.86,403.75 L577.59,401.77 L580.34,399.82 L583.10,397.89 L585.88,395.98 L588.67,394.09 L591.47,392.22 L594.29,390.37 L597.12,388.54 L599.97,386.73 L602.82,384.94 L605.69,383.17 L608.57,381.43 L611.47,379.70 L614.38,378.00 L617.30,376.32 L620.23,374.66 L623.18,373.02 L626.13,371.40 L629.10,369.80"/><path d="M733.92,174.42 L727.57,173.15 L721.18,172.15 L714.74,171.45 L708.28,171.03 L701.81,170.90 L695.34,171.06 L688.88,171.52 L682.45,172.26 L676.06,173.28 L669.72,174.60 L663.45,176.19 L657.25,178.07 L651.14,180.22 L645.14,182.64 L639.25,185.33 L633.49,188.28 L627.87,191.49 L622.39,194.94 L617.08,198.63 L611.93,202.56 L606.97,206.72 L602.20,211.09 L597.63,215.68 L593.26,220.46 L589.12,225.44 L585.21,230.59 L581.52,235.92 L578.09,241.40 L574.90,247.03 L571.96,252.80 L569.29,258.70 L566.88,264.71 L564.75,270.82 L562.89,277.02 L561.31,283.30 L560.01,289.64 L559.00,296.04 L558.28,302.47 L557.85,308.93 L557.70,315.40 L557.85,321.87 L558.28,328.33 L559.00,334.76 L560.01,341.16 L561.31,347.50 L562.89,353.78 L564.75,359.98 L566.88,366.09 L569.29,372.10 L571.96,378.00 L574.90,383.77 L578.09,389.40 L581.52,394.88 L585.21,400.21 L589.12,405.36 L593.26,410.34 L597.63,415.12 L602.20,419.71 L606.97,424.08 L611.93,428.24 L617.08,432.17 L622.39,435.86 L627.87,439.31 L633.49,442.52 L639.25,445.47 L645.14,448.16 L651.14,450.58 L657.25,452.73 L663.45,454.61 L669.72,456.20 L676.06,457.52 L682.45,458.54 L688.88,459.28 L695.34,459.74 L701.81,459.90 L708.28,459.77 L714.74,459.35 L721.18,458.65 L727.57,457.65 L733.92,456.38"/><path d="M506.70,111.40 L508.80,115.28 L510.94,119.13 L513.12,122.95 L515.35,126.76 L517.62,130.53 L519.93,134.28 L522.29,138.00 L524.69,141.70 L527.13,145.37 L529.61,149.01 L532.13,152.62 L534.70,156.20 L537.30,159.75 L539.95,163.28 L542.64,166.77 L545.36,170.23 L548.13,173.66 L550.93,177.06 L553.78,180.42 L556.66,183.76 L559.58,187.06 L562.54,190.32 L565.53,193.55 L568.56,196.75 L571.63,199.91 L574.73,203.04 L577.87,206.13 L581.04,209.19 L584.25,212.21 L587.50,215.19 L590.77,218.14 L594.08,221.04 L597.43,223.91 L600.80,226.74 L604.21,229.54 L607.65,232.29 L611.12,235.00 L614.63,237.68 L618.16,240.31 L621.72,242.90 L625.31,245.45 L628.93,247.96 L632.58,250.43 L636.26,252.86 L639.96,255.25 L643.69,257.59 L647.45,259.89 L651.24,262.14 L655.05,264.36 L658.88,266.53 L662.74,268.65 L666.62,270.73 L670.53,272.77 L674.46,274.76 L678.41,276.71 L682.39,278.61 L686.38,280.47 L690.40,282.28 L694.44,284.04 L698.49,285.76"/><path d="M506.70,519.40 L508.80,515.52 L510.94,511.67 L513.12,507.85 L515.35,504.04 L517.62,500.27 L519.93,496.52 L522.29,492.80 L524.69,489.10 L527.13,485.43 L529.61,481.79 L532.13,478.18 L534.70,474.60 L537.30,471.05 L539.95,467.52 L542.64,464.03 L545.36,460.57 L548.13,457.14 L550.93,453.74 L553.78,450.38 L556.66,447.04 L559.58,443.74 L562.54,440.48 L565.53,437.25 L568.56,434.05 L571.63,430.89 L574.73,427.76 L577.87,424.67 L581.04,421.61 L584.25,418.59 L587.50,415.61 L590.77,412.66 L594.08,409.76 L597.43,406.89 L600.80,404.06 L604.21,401.26 L607.65,398.51 L611.12,395.80 L614.63,393.12 L618.16,390.49 L621.72,387.90 L625.31,385.35 L628.93,382.84 L632.58,380.37 L636.26,377.94 L639.96,375.55 L643.69,373.21 L647.45,370.91 L651.24,368.66 L655.05,366.44 L658.88,364.27 L662.74,362.15 L666.62,360.07 L670.53,358.03 L674.46,356.04 L678.41,354.09 L682.39,352.19 L686.38,350.33 L690.40,348.52 L694.44,346.76 L698.49,345.04"/><path d="M644.62,196.53 L641.49,198.33 L638.40,200.21 L635.36,202.17 L632.38,204.22 L629.45,206.34 L626.58,208.54 L623.77,210.81 L621.02,213.16 L618.33,215.58 L615.71,218.07 L613.16,220.63 L610.67,223.25 L608.26,225.95 L605.92,228.70 L603.65,231.52 L601.46,234.39 L599.34,237.32 L597.31,240.31 L595.35,243.35 L593.48,246.45 L591.69,249.59 L589.98,252.77 L588.36,256.00 L586.82,259.28 L585.37,262.59 L584.01,265.94 L582.74,269.33 L581.56,272.74 L580.47,276.19 L579.48,279.67 L578.57,283.17 L577.76,286.69 L577.05,290.24 L576.43,293.80 L575.90,297.37 L575.47,300.96 L575.13,304.56 L574.89,308.17 L574.75,311.78 L574.70,315.40 L574.75,319.02 L574.89,322.63 L575.13,326.24 L575.47,329.84 L575.90,333.43 L576.43,337.00 L577.05,340.56 L577.76,344.11 L578.57,347.63 L579.48,351.13 L580.47,354.61 L581.56,358.06 L582.74,361.47 L584.01,364.86 L585.37,368.21 L586.82,371.52 L588.36,374.80 L589.98,378.03 L591.69,381.21 L593.48,384.35 L595.35,387.45 L597.31,390.49 L599.34,393.48 L601.46,396.41 L603.65,399.28 L605.92,402.10 L608.26,404.85 L610.67,407.55 L613.16,410.17 L615.71,412.73 L618.33,415.22 L621.02,417.64 L623.77,419.99 L626.58,422.26 L629.45,424.46 L632.38,426.58 L635.36,428.63 L638.40,430.59 L641.49,432.47 L644.62,434.27"/><path d="M536.36,98.17 L537.41,101.00 L538.48,103.82 L539.58,106.63 L540.70,109.43 L541.85,112.22 L543.02,115.00 L544.22,117.77 L545.45,120.52 L546.70,123.27 L547.97,126.00 L549.27,128.73 L550.60,131.44 L551.94,134.14 L553.32,136.82 L554.72,139.50 L556.14,142.16 L557.58,144.80 L559.06,147.44 L560.55,150.06 L562.07,152.67 L563.61,155.26 L565.18,157.84 L566.77,160.40 L568.38,162.95 L570.02,165.49 L571.68,168.01 L573.36,170.51 L575.06,173.00 L576.79,175.48 L578.54,177.93 L580.31,180.38 L582.11,182.80 L583.93,185.21 L585.76,187.60 L587.62,189.98 L589.51,192.33 L591.41,194.68 L593.34,197.00 L595.28,199.30 L597.25,201.59 L599.24,203.86 L601.24,206.11 L603.27,208.35 L605.32,210.56 L607.39,212.76 L609.48,214.93 L611.59,217.09 L613.72,219.23 L615.87,221.35 L618.04,223.45 L620.22,225.52 L622.43,227.58 L624.65,229.62 L626.90,231.64 L629.16,233.64 L631.44,235.61 L633.73,237.57 L636.05,239.50 L638.38,241.42 L640.73,243.31"/><path d="M536.36,532.63 L537.41,529.80 L538.48,526.98 L539.58,524.17 L540.70,521.37 L541.85,518.58 L543.02,515.80 L544.22,513.03 L545.45,510.28 L546.70,507.53 L547.97,504.80 L549.27,502.07 L550.60,499.36 L551.94,496.66 L553.32,493.98 L554.72,491.30 L556.14,488.64 L557.58,486.00 L559.06,483.36 L560.55,480.74 L562.07,478.13 L563.61,475.54 L565.18,472.96 L566.77,470.40 L568.38,467.85 L570.02,465.31 L571.68,462.79 L573.36,460.29 L575.06,457.80 L576.79,455.32 L578.54,452.87 L580.31,450.42 L582.11,448.00 L583.93,445.59 L585.76,443.20 L587.62,440.82 L589.51,438.47 L591.41,436.12 L593.34,433.80 L595.28,431.50 L597.25,429.21 L599.24,426.94 L601.24,424.69 L603.27,422.45 L605.32,420.24 L607.39,418.04 L609.48,415.87 L611.59,413.71 L613.72,411.57 L615.87,409.45 L618.04,407.35 L620.22,405.28 L622.43,403.22 L624.65,401.18 L626.90,399.16 L629.16,397.16 L631.44,395.19 L633.73,393.23 L636.05,391.30 L638.38,389.38 L640.73,387.49"/><path d="M731.74,187.67 L726.38,187.21 L721.00,186.98 L715.62,186.98 L710.24,187.21 L704.88,187.65 L699.54,188.33 L694.23,189.22 L688.97,190.34 L683.76,191.68 L678.60,193.23 L673.52,195.00 L668.52,196.98 L663.60,199.16 L658.78,201.55 L654.06,204.15 L649.46,206.93 L644.98,209.91 L640.62,213.07 L636.41,216.41 L632.33,219.93 L628.41,223.61 L624.64,227.45 L621.04,231.45 L617.61,235.60 L614.35,239.88 L611.28,244.30 L608.40,248.85 L605.71,253.51 L603.21,258.27 L600.92,263.14 L598.84,268.10 L596.96,273.15 L595.30,278.27 L593.85,283.45 L592.62,288.69 L591.61,293.97 L590.82,299.30 L590.26,304.65 L589.92,310.02 L589.81,315.40 L589.92,320.78 L590.26,326.15 L590.82,331.50 L591.61,336.83 L592.62,342.11 L593.85,347.35 L595.30,352.53 L596.96,357.65 L598.84,362.70 L600.92,367.66 L603.21,372.53 L605.71,377.29 L608.40,381.95 L611.28,386.50 L614.35,390.92 L617.61,395.20 L621.04,399.35 L624.64,403.35 L628.41,407.19 L632.33,410.87 L636.41,414.39 L640.62,417.73 L644.98,420.89 L649.46,423.87 L654.06,426.65 L658.78,429.25 L663.60,431.64 L668.52,433.82 L673.52,435.80 L678.60,437.57 L683.76,439.12 L688.97,440.46 L694.23,441.58 L699.54,442.47 L704.88,443.15 L710.24,443.59 L715.62,443.82 L721.00,443.82 L726.38,443.59 L731.74,443.13"/><path d="M564.75,89.84 L565.65,93.73 L566.61,97.60 L567.62,101.46 L568.68,105.30 L569.80,109.13 L570.96,112.95 L572.18,116.75 L573.46,120.53 L574.78,124.29 L576.16,128.03 L577.59,131.76 L579.07,135.46 L580.60,139.15 L582.18,142.81 L583.81,146.45 L585.50,150.07 L587.23,153.66 L589.01,157.23 L590.84,160.78 L592.72,164.30 L594.65,167.79 L596.62,171.25 L598.65,174.69 L600.72,178.10 L602.84,181.48 L605.00,184.84 L607.21,188.16 L609.47,191.45 L611.77,194.71 L614.11,197.93 L616.50,201.13 L618.94,204.29 L621.41,207.42 L623.93,210.51 L626.50,213.57 L629.10,216.59 L631.75,219.57 L634.43,222.52 L637.16,225.43 L639.93,228.31 L642.74,231.14 L645.58,233.94 L648.47,236.70 L651.39,239.41 L654.35,242.09 L657.34,244.72 L660.37,247.32 L663.44,249.87 L666.54,252.38 L669.68,254.84 L672.85,257.26 L676.05,259.64 L679.29,261.97 L682.56,264.26 L685.86,266.51 L689.19,268.70 L692.55,270.85 L695.94,272.96 L699.35,275.02 L702.80,277.03"/><path d="M564.75,540.96 L565.65,537.07 L566.61,533.20 L567.62,529.34 L568.68,525.50 L569.80,521.67 L570.96,517.85 L572.18,514.05 L573.46,510.27 L574.78,506.51 L576.16,502.77 L577.59,499.04 L579.07,495.34 L580.60,491.65 L582.18,487.99 L583.81,484.35 L585.50,480.73 L587.23,477.14 L589.01,473.57 L590.84,470.02 L592.72,466.50 L594.65,463.01 L596.62,459.55 L598.65,456.11 L600.72,452.70 L602.84,449.32 L605.00,445.96 L607.21,442.64 L609.47,439.35 L611.77,436.09 L614.11,432.87 L616.50,429.67 L618.94,426.51 L621.41,423.38 L623.93,420.29 L626.50,417.23 L629.10,414.21 L631.75,411.23 L634.43,408.28 L637.16,405.37 L639.93,402.49 L642.74,399.66 L645.58,396.86 L648.47,394.10 L651.39,391.39 L654.35,388.71 L657.34,386.08 L660.37,383.48 L663.44,380.93 L666.54,378.42 L669.68,375.96 L672.85,373.54 L676.05,371.16 L679.29,368.83 L682.56,366.54 L685.86,364.29 L689.19,362.10 L692.55,359.95 L695.94,357.84 L699.35,355.78 L702.80,353.77"/><path d="M656.12,215.10 L653.71,216.79 L651.35,218.55 L649.02,220.36 L646.74,222.23 L644.51,224.16 L642.32,226.13 L640.18,228.16 L638.10,230.24 L636.06,232.37 L634.07,234.55 L632.14,236.78 L630.27,239.05 L628.44,241.37 L626.68,243.73 L624.97,246.13 L623.32,248.57 L621.73,251.06 L620.21,253.58 L618.74,256.13 L617.34,258.73 L615.99,261.35 L614.72,264.01 L613.50,266.69 L612.36,269.41 L611.28,272.15 L610.26,274.92 L609.32,277.71 L608.44,280.52 L607.63,283.36 L606.88,286.21 L606.21,289.08 L605.61,291.97 L605.08,294.87 L604.61,297.78 L604.22,300.70 L603.90,303.63 L603.65,306.56 L603.47,309.51 L603.37,312.45 L603.33,315.40 L603.37,318.35 L603.47,321.29 L603.65,324.24 L603.90,327.17 L604.22,330.10 L604.61,333.02 L605.08,335.93 L605.61,338.83 L606.21,341.72 L606.88,344.59 L607.63,347.44 L608.44,350.28 L609.32,353.09 L610.26,355.88 L611.28,358.65 L612.36,361.39 L613.50,364.11 L614.72,366.79 L615.99,369.45 L617.34,372.07 L618.74,374.67 L620.21,377.22 L621.73,379.74 L623.32,382.23 L624.97,384.67 L626.68,387.07 L628.44,389.43 L630.27,391.75 L632.14,394.02 L634.07,396.25 L636.06,398.43 L638.10,400.56 L640.18,402.64 L642.32,404.67 L644.51,406.64 L646.74,408.57 L649.02,410.44 L651.35,412.25 L653.71,414.01 L656.12,415.70"/><path d="M591.23,85.48 L591.52,88.12 L591.84,90.75 L592.19,93.38 L592.56,96.01 L592.96,98.63 L593.39,101.25 L593.85,103.87 L594.33,106.48 L594.84,109.08 L595.37,111.68 L595.94,114.28 L596.53,116.86 L597.14,119.45 L597.79,122.02 L598.45,124.59 L599.15,127.15 L599.87,129.70 L600.62,132.25 L601.40,134.79 L602.20,137.32 L603.03,139.84 L603.88,142.35 L604.76,144.86 L605.66,147.35 L606.59,149.84 L607.55,152.32 L608.53,154.78 L609.54,157.24 L610.57,159.68 L611.63,162.12 L612.71,164.54 L613.82,166.95 L614.95,169.35 L616.11,171.74 L617.29,174.12 L618.50,176.48 L619.73,178.83 L620.99,181.17 L622.27,183.50 L623.57,185.81 L624.90,188.11 L626.25,190.39 L627.62,192.66 L629.02,194.92 L630.44,197.16 L631.88,199.39 L633.35,201.60 L634.84,203.80 L636.35,205.98 L637.89,208.14 L639.45,210.29 L641.02,212.42 L642.63,214.54 L644.25,216.64 L645.89,218.72 L647.56,220.79 L649.25,222.84 L650.95,224.87 L652.68,226.88 L654.43,228.88"/><path d="M591.23,545.32 L591.52,542.68 L591.84,540.05 L592.19,537.42 L592.56,534.79 L592.96,532.17 L593.39,529.55 L593.85,526.93 L594.33,524.32 L594.84,521.72 L595.37,519.12 L595.94,516.52 L596.53,513.94 L597.14,511.35 L597.79,508.78 L598.45,506.21 L599.15,503.65 L599.87,501.10 L600.62,498.55 L601.40,496.01 L602.20,493.48 L603.03,490.96 L603.88,488.45 L604.76,485.94 L605.66,483.45 L606.59,480.96 L607.55,478.48 L608.53,476.02 L609.54,473.56 L610.57,471.12 L611.63,468.68 L612.71,466.26 L613.82,463.85 L614.95,461.45 L616.11,459.06 L617.29,456.68 L618.50,454.32 L619.73,451.97 L620.99,449.63 L622.27,447.30 L623.57,444.99 L624.90,442.69 L626.25,440.41 L627.62,438.14 L629.02,435.88 L630.44,433.64 L631.88,431.41 L633.35,429.20 L634.84,427.00 L636.35,424.82 L637.89,422.66 L639.45,420.51 L641.02,418.38 L642.63,416.26 L644.25,414.16 L645.89,412.08 L647.56,410.01 L649.25,407.96 L650.95,405.93 L652.68,403.92 L654.43,401.92"/><path d="M814.81,235.68 L809.92,230.84 L804.75,226.30 L799.32,222.08 L793.65,218.18 L787.76,214.64 L781.66,211.44 L775.39,208.62 L768.96,206.18 L762.40,204.12 L755.72,202.45 L748.96,201.19 L742.14,200.33 L735.27,199.88 L728.39,199.83 L721.52,200.20 L714.69,200.97 L707.91,202.15 L701.22,203.73 L694.63,205.70 L688.17,208.07 L681.86,210.81 L675.73,213.93 L669.79,217.40 L664.07,221.22 L658.58,225.37 L653.36,229.85 L648.41,234.62 L643.75,239.68 L639.40,245.01 L635.38,250.59 L631.69,256.40 L628.36,262.42 L625.39,268.62 L622.79,274.99 L620.58,281.51 L618.76,288.14 L617.34,294.87 L616.32,301.67 L615.70,308.52 L615.50,315.40 L615.70,322.28 L616.32,329.13 L617.34,335.93 L618.76,342.66 L620.58,349.29 L622.79,355.81 L625.39,362.18 L628.36,368.38 L631.69,374.40 L635.38,380.21 L639.40,385.79 L643.75,391.12 L648.41,396.18 L653.36,400.95 L658.58,405.43 L664.07,409.58 L669.79,413.40 L675.73,416.87 L681.86,419.99 L688.17,422.73 L694.63,425.10 L701.22,427.07 L707.91,428.65 L714.69,429.83 L721.52,430.60 L728.39,430.97 L735.27,430.92 L742.14,430.47 L748.96,429.61 L755.72,428.35 L762.40,426.68 L768.96,424.62 L775.39,422.18 L781.66,419.36 L787.76,416.16 L793.65,412.62 L799.32,408.72 L804.75,404.50 L809.92,399.96 L814.81,395.12"/><path d="M615.50,84.20 L615.55,88.98 L615.70,93.76 L615.94,98.53 L616.29,103.30 L616.73,108.06 L617.28,112.81 L617.92,117.54 L618.66,122.27 L619.49,126.97 L620.42,131.66 L621.45,136.33 L622.58,140.97 L623.80,145.60 L625.12,150.19 L626.53,154.76 L628.03,159.29 L629.63,163.80 L631.33,168.27 L633.11,172.70 L634.99,177.10 L636.95,181.46 L639.01,185.77 L641.15,190.04 L643.38,194.27 L645.70,198.45 L648.11,202.58 L650.60,206.66 L653.17,210.69 L655.83,214.66 L658.56,218.58 L661.38,222.44 L664.28,226.24 L667.26,229.99 L670.31,233.66 L673.44,237.28 L676.64,240.83 L679.91,244.31 L683.26,247.72 L686.67,251.07 L690.16,254.34 L693.71,257.54 L697.32,260.67 L701.00,263.72 L704.75,266.69 L708.55,269.59 L712.41,272.40 L716.33,275.14 L720.31,277.79 L724.34,280.36 L728.42,282.85 L732.55,285.26 L736.73,287.57 L740.96,289.80 L745.23,291.94 L749.55,294.00 L753.91,295.96 L758.30,297.83 L762.74,299.62 L767.21,301.31 L771.72,302.90"/><path d="M615.50,546.60 L615.55,541.82 L615.70,537.04 L615.94,532.27 L616.29,527.50 L616.73,522.74 L617.28,517.99 L617.92,513.26 L618.66,508.53 L619.49,503.83 L620.42,499.14 L621.45,494.47 L622.58,489.83 L623.80,485.20 L625.12,480.61 L626.53,476.04 L628.03,471.51 L629.63,467.00 L631.33,462.53 L633.11,458.10 L634.99,453.70 L636.95,449.34 L639.01,445.03 L641.15,440.76 L643.38,436.53 L645.70,432.35 L648.11,428.22 L650.60,424.14 L653.17,420.11 L655.83,416.14 L658.56,412.22 L661.38,408.36 L664.28,404.56 L667.26,400.81 L670.31,397.14 L673.44,393.52 L676.64,389.97 L679.91,386.49 L683.26,383.08 L686.67,379.73 L690.16,376.46 L693.71,373.26 L697.32,370.13 L701.00,367.08 L704.75,364.11 L708.55,361.21 L712.41,358.40 L716.33,355.66 L720.31,353.01 L724.34,350.44 L728.42,347.95 L732.55,345.54 L736.73,343.23 L740.96,341.00 L745.23,338.86 L749.55,336.80 L753.91,334.84 L758.30,332.97 L762.74,331.18 L767.21,329.49 L771.72,327.90"/><path d="M731.62,210.78 L727.77,211.22 L723.94,211.81 L720.13,212.53 L716.35,213.39 L712.61,214.39 L708.90,215.53 L705.24,216.80 L701.63,218.21 L698.07,219.75 L694.57,221.42 L691.14,223.22 L687.77,225.15 L684.48,227.19 L681.27,229.36 L678.13,231.65 L675.09,234.04 L672.13,236.55 L669.27,239.17 L666.51,241.89 L663.85,244.71 L661.29,247.62 L658.85,250.63 L656.52,253.73 L654.30,256.91 L652.20,260.17 L650.23,263.50 L648.37,266.91 L646.65,270.38 L645.05,273.92 L643.59,277.50 L642.26,281.15 L641.06,284.83 L640.00,288.56 L639.08,292.33 L638.30,296.13 L637.66,299.95 L637.16,303.79 L636.80,307.65 L636.59,311.52 L636.52,315.40 L636.59,319.28 L636.80,323.15 L637.16,327.01 L637.66,330.85 L638.30,334.67 L639.08,338.47 L640.00,342.24 L641.06,345.97 L642.26,349.65 L643.59,353.30 L645.05,356.88 L646.65,360.42 L648.37,363.89 L650.23,367.30 L652.20,370.63 L654.30,373.89 L656.52,377.07 L658.85,380.17 L661.29,383.18 L663.85,386.09 L666.51,388.91 L669.27,391.63 L672.13,394.25 L675.09,396.76 L678.13,399.15 L681.27,401.44 L684.48,403.61 L687.77,405.65 L691.14,407.58 L694.57,409.38 L698.07,411.05 L701.63,412.59 L705.24,414.00 L708.90,415.27 L712.61,416.41 L716.35,417.41 L720.13,418.27 L723.94,418.99 L727.77,419.58 L731.62,420.02"/><path d="M657.19,87.99 L656.64,91.13 L656.15,94.27 L655.70,97.42 L655.31,100.58 L654.97,103.74 L654.68,106.91 L654.45,110.09 L654.27,113.26 L654.14,116.44 L654.06,119.62 L654.03,122.81 L654.06,125.99 L654.14,129.17 L654.27,132.35 L654.46,135.53 L654.70,138.70 L654.99,141.87 L655.33,145.03 L655.72,148.19 L656.17,151.34 L656.67,154.49 L657.22,157.62 L657.82,160.75 L658.47,163.86 L659.18,166.96 L659.94,170.06 L660.74,173.13 L661.60,176.20 L662.51,179.25 L663.47,182.28 L664.48,185.30 L665.53,188.30 L666.64,191.29 L667.80,194.25 L669.00,197.20 L670.26,200.12 L671.56,203.03 L672.91,205.91 L674.31,208.77 L675.75,211.60 L677.24,214.41 L678.78,217.20 L680.37,219.96 L681.99,222.70 L683.67,225.40 L685.39,228.08 L687.15,230.73 L688.95,233.35 L690.80,235.94 L692.69,238.50 L694.63,241.03 L696.60,243.53 L698.62,245.99 L700.67,248.42 L702.77,250.81 L704.90,253.17 L707.08,255.50 L709.29,257.79 L711.54,260.04 L713.83,262.25"/><path d="M657.19,542.81 L656.64,539.67 L656.15,536.53 L655.70,533.38 L655.31,530.22 L654.97,527.06 L654.68,523.89 L654.45,520.71 L654.27,517.54 L654.14,514.36 L654.06,511.18 L654.03,507.99 L654.06,504.81 L654.14,501.63 L654.27,498.45 L654.46,495.27 L654.70,492.10 L654.99,488.93 L655.33,485.77 L655.72,482.61 L656.17,479.46 L656.67,476.31 L657.22,473.18 L657.82,470.05 L658.47,466.94 L659.18,463.84 L659.94,460.74 L660.74,457.67 L661.60,454.60 L662.51,451.55 L663.47,448.52 L664.48,445.50 L665.53,442.50 L666.64,439.51 L667.80,436.55 L669.00,433.60 L670.26,430.68 L671.56,427.77 L672.91,424.89 L674.31,422.03 L675.75,419.20 L677.24,416.39 L678.78,413.60 L680.37,410.84 L681.99,408.10 L683.67,405.40 L685.39,402.72 L687.15,400.07 L688.95,397.45 L690.80,394.86 L692.69,392.30 L694.63,389.77 L696.60,387.27 L698.62,384.81 L700.67,382.38 L702.77,379.99 L704.90,377.63 L707.08,375.30 L709.29,373.01 L711.54,370.76 L713.83,368.55"/><path d="M733.00,220.65 L729.71,221.31 L726.46,222.08 L723.23,222.97 L720.04,223.97 L716.88,225.07 L713.76,226.29 L710.69,227.62 L707.67,229.05 L704.69,230.58 L701.78,232.22 L698.92,233.96 L696.12,235.79 L693.39,237.72 L690.72,239.75 L688.13,241.87 L685.62,244.07 L683.18,246.37 L680.82,248.74 L678.55,251.20 L676.36,253.73 L674.26,256.34 L672.26,259.01 L670.35,261.76 L668.53,264.57 L666.82,267.45 L665.20,270.38 L663.69,273.36 L662.28,276.40 L660.98,279.48 L659.79,282.61 L658.70,285.77 L657.73,288.97 L656.87,292.21 L656.12,295.47 L655.48,298.75 L654.96,302.06 L654.56,305.38 L654.27,308.71 L654.09,312.05 L654.03,315.40 L654.09,318.75 L654.27,322.09 L654.56,325.42 L654.96,328.74 L655.48,332.05 L656.12,335.33 L656.87,338.59 L657.73,341.83 L658.70,345.03 L659.79,348.19 L660.98,351.32 L662.28,354.40 L663.69,357.44 L665.20,360.42 L666.82,363.35 L668.53,366.23 L670.35,369.04 L672.26,371.79 L674.26,374.46 L676.36,377.07 L678.55,379.60 L680.82,382.06 L683.18,384.43 L685.62,386.73 L688.13,388.93 L690.72,391.05 L693.39,393.08 L696.12,395.01 L698.92,396.84 L701.78,398.58 L704.69,400.22 L707.67,401.75 L710.69,403.18 L713.76,404.51 L716.88,405.73 L720.04,406.83 L723.23,407.83 L726.46,408.72 L729.71,409.49 L733.00,410.15"/><path d="M690.48,96.70 L689.59,99.38 L688.74,102.08 L687.94,104.79 L687.18,107.52 L686.47,110.26 L685.81,113.01 L685.20,115.77 L684.63,118.54 L684.11,121.32 L683.64,124.11 L683.22,126.91 L682.84,129.71 L682.51,132.52 L682.23,135.34 L682.00,138.16 L681.82,140.98 L681.68,143.81 L681.60,146.63 L681.56,149.46 L681.57,152.29 L681.63,155.12 L681.74,157.95 L681.89,160.77 L682.10,163.59 L682.35,166.41 L682.65,169.22 L683.00,172.03 L683.40,174.83 L683.84,177.63 L684.33,180.41 L684.87,183.19 L685.46,185.96 L686.10,188.71 L686.78,191.46 L687.51,194.19 L688.28,196.91 L689.11,199.62 L689.98,202.31 L690.89,204.99 L691.85,207.65 L692.86,210.29 L693.91,212.92 L695.00,215.53 L696.14,218.12 L697.33,220.68 L698.56,223.23 L699.83,225.76 L701.14,228.27 L702.50,230.75 L703.90,233.21 L705.34,235.64 L706.83,238.05 L708.35,240.43 L709.91,242.79 L711.52,245.12 L713.16,247.42 L714.85,249.69 L716.57,251.94 L718.33,254.15 L720.13,256.33"/><path d="M690.48,534.10 L689.59,531.42 L688.74,528.72 L687.94,526.01 L687.18,523.28 L686.47,520.54 L685.81,517.79 L685.20,515.03 L684.63,512.26 L684.11,509.48 L683.64,506.69 L683.22,503.89 L682.84,501.09 L682.51,498.28 L682.23,495.46 L682.00,492.64 L681.82,489.82 L681.68,486.99 L681.60,484.17 L681.56,481.34 L681.57,478.51 L681.63,475.68 L681.74,472.85 L681.89,470.03 L682.10,467.21 L682.35,464.39 L682.65,461.58 L683.00,458.77 L683.40,455.97 L683.84,453.17 L684.33,450.39 L684.87,447.61 L685.46,444.84 L686.10,442.09 L686.78,439.34 L687.51,436.61 L688.28,433.89 L689.11,431.18 L689.98,428.49 L690.89,425.81 L691.85,423.15 L692.86,420.51 L693.91,417.88 L695.00,415.27 L696.14,412.68 L697.33,410.12 L698.56,407.57 L699.83,405.04 L701.14,402.53 L702.50,400.05 L703.90,397.59 L705.34,395.16 L706.83,392.75 L708.35,390.37 L709.91,388.01 L711.52,385.68 L713.16,383.38 L714.85,381.11 L716.57,378.86 L718.33,376.65 L720.13,374.47"/><path d="M734.97,229.45 L732.16,230.25 L729.39,231.13 L726.64,232.11 L723.92,233.17 L721.25,234.33 L718.61,235.57 L716.01,236.89 L713.46,238.31 L710.96,239.80 L708.51,241.37 L706.11,243.03 L703.76,244.76 L701.48,246.57 L699.25,248.45 L697.09,250.41 L694.99,252.43 L692.96,254.52 L691.00,256.68 L689.11,258.90 L687.29,261.18 L685.56,263.52 L683.89,265.92 L682.31,268.37 L680.81,270.86 L679.39,273.41 L678.06,276.00 L676.81,278.64 L675.65,281.31 L674.57,284.02 L673.59,286.77 L672.70,289.54 L671.89,292.34 L671.19,295.17 L670.57,298.02 L670.05,300.89 L669.62,303.77 L669.28,306.67 L669.04,309.57 L668.90,312.49 L668.85,315.40 L668.90,318.31 L669.04,321.23 L669.28,324.13 L669.62,327.03 L670.05,329.91 L670.57,332.78 L671.19,335.63 L671.89,338.46 L672.70,341.26 L673.59,344.03 L674.57,346.78 L675.65,349.49 L676.81,352.16 L678.06,354.80 L679.39,357.39 L680.81,359.94 L682.31,362.43 L683.89,364.88 L685.56,367.28 L687.29,369.62 L689.11,371.90 L691.00,374.12 L692.96,376.28 L694.99,378.37 L697.09,380.39 L699.25,382.35 L701.48,384.23 L703.76,386.04 L706.11,387.77 L708.51,389.43 L710.96,391.00 L713.46,392.49 L716.01,393.91 L718.61,395.23 L721.25,396.47 L723.92,397.63 L726.64,398.69 L729.39,399.67 L732.16,400.55 L734.97,401.35"/><path d="M716.81,107.58 L715.73,109.85 L714.69,112.14 L713.68,114.45 L712.72,116.77 L711.80,119.11 L710.92,121.47 L710.08,123.84 L709.28,126.22 L708.52,128.62 L707.81,131.03 L707.14,133.46 L706.50,135.89 L705.92,138.34 L705.37,140.79 L704.87,143.26 L704.41,145.73 L703.99,148.21 L703.62,150.70 L703.29,153.19 L703.00,155.69 L702.76,158.20 L702.56,160.70 L702.40,163.21 L702.29,165.73 L702.22,168.24 L702.20,170.76 L702.22,173.27 L702.28,175.79 L702.39,178.30 L702.54,180.81 L702.73,183.32 L702.97,185.82 L703.25,188.32 L703.58,190.82 L703.95,193.31 L704.36,195.79 L704.81,198.26 L705.31,200.73 L705.85,203.18 L706.44,205.63 L707.06,208.07 L707.73,210.49 L708.44,212.90 L709.19,215.30 L709.99,217.69 L710.82,220.06 L711.70,222.42 L712.61,224.76 L713.57,227.09 L714.57,229.40 L715.61,231.69 L716.69,233.96 L717.80,236.22 L718.96,238.45 L720.16,240.66 L721.39,242.86 L722.66,245.03 L723.97,247.17 L725.32,249.30 L726.70,251.40"/><path d="M716.81,523.22 L715.73,520.95 L714.69,518.66 L713.68,516.35 L712.72,514.03 L711.80,511.69 L710.92,509.33 L710.08,506.96 L709.28,504.58 L708.52,502.18 L707.81,499.77 L707.14,497.34 L706.50,494.91 L705.92,492.46 L705.37,490.01 L704.87,487.54 L704.41,485.07 L703.99,482.59 L703.62,480.10 L703.29,477.61 L703.00,475.11 L702.76,472.60 L702.56,470.10 L702.40,467.59 L702.29,465.07 L702.22,462.56 L702.20,460.04 L702.22,457.53 L702.28,455.01 L702.39,452.50 L702.54,449.99 L702.73,447.48 L702.97,444.98 L703.25,442.48 L703.58,439.98 L703.95,437.49 L704.36,435.01 L704.81,432.54 L705.31,430.07 L705.85,427.62 L706.44,425.17 L707.06,422.73 L707.73,420.31 L708.44,417.90 L709.19,415.50 L709.99,413.11 L710.82,410.74 L711.70,408.38 L712.61,406.04 L713.57,403.71 L714.57,401.40 L715.61,399.11 L716.69,396.84 L717.80,394.58 L718.96,392.35 L720.16,390.14 L721.39,387.94 L722.66,385.77 L723.97,383.63 L725.32,381.50 L726.70,379.40"/><path d="M737.35,237.29 L734.94,238.16 L732.56,239.10 L730.21,240.12 L727.89,241.21 L725.61,242.36 L723.36,243.59 L721.15,244.89 L718.99,246.26 L716.87,247.69 L714.79,249.19 L712.76,250.75 L710.78,252.38 L708.85,254.06 L706.98,255.80 L705.16,257.61 L703.39,259.46 L701.69,261.37 L700.04,263.33 L698.46,265.35 L696.94,267.41 L695.48,269.51 L694.09,271.66 L692.77,273.86 L691.52,276.09 L690.33,278.36 L689.22,280.67 L688.18,283.00 L687.21,285.38 L686.32,287.77 L685.50,290.20 L684.75,292.65 L684.09,295.12 L683.50,297.62 L682.98,300.12 L682.55,302.65 L682.19,305.18 L681.91,307.73 L681.72,310.28 L681.60,312.84 L681.56,315.40 L681.60,317.96 L681.72,320.52 L681.91,323.07 L682.19,325.62 L682.55,328.15 L682.98,330.68 L683.50,333.18 L684.09,335.68 L684.75,338.15 L685.50,340.60 L686.32,343.03 L687.21,345.42 L688.18,347.80 L689.22,350.13 L690.33,352.44 L691.52,354.71 L692.77,356.94 L694.09,359.14 L695.48,361.29 L696.94,363.39 L698.46,365.45 L700.04,367.47 L701.69,369.43 L703.39,371.34 L705.16,373.19 L706.98,375.00 L708.85,376.74 L710.78,378.42 L712.76,380.05 L714.79,381.61 L716.87,383.11 L718.99,384.54 L721.15,385.91 L723.36,387.21 L725.61,388.44 L727.89,389.59 L730.21,390.68 L732.56,391.70 L734.94,392.64 L737.35,393.51"/><path d="M737.64,119.10 L736.48,121.01 L735.34,122.94 L734.24,124.90 L733.18,126.87 L732.15,128.86 L731.15,130.86 L730.19,132.89 L729.27,134.93 L728.38,136.98 L727.52,139.05 L726.70,141.14 L725.92,143.24 L725.18,145.35 L724.47,147.48 L723.80,149.62 L723.17,151.77 L722.58,153.93 L722.02,156.10 L721.50,158.28 L721.02,160.46 L720.57,162.66 L720.17,164.86 L719.80,167.07 L719.48,169.29 L719.19,171.51 L718.94,173.74 L718.73,175.97 L718.55,178.20 L718.42,180.44 L718.33,182.68 L718.27,184.92 L718.26,187.16 L718.28,189.40 L718.34,191.64 L718.44,193.87 L718.58,196.11 L718.76,198.34 L718.98,200.57 L719.24,202.80 L719.53,205.02 L719.87,207.23 L720.24,209.44 L720.65,211.65 L721.10,213.84 L721.59,216.03 L722.11,218.21 L722.68,220.37 L723.28,222.53 L723.92,224.68 L724.60,226.81 L725.31,228.94 L726.06,231.05 L726.85,233.15 L727.67,235.23 L728.53,237.30 L729.43,239.35 L730.36,241.39 L731.33,243.41 L732.33,245.41 L733.37,247.40"/><path d="M737.64,511.70 L736.48,509.79 L735.34,507.86 L734.24,505.90 L733.18,503.93 L732.15,501.94 L731.15,499.94 L730.19,497.91 L729.27,495.87 L728.38,493.82 L727.52,491.75 L726.70,489.66 L725.92,487.56 L725.18,485.45 L724.47,483.32 L723.80,481.18 L723.17,479.03 L722.58,476.87 L722.02,474.70 L721.50,472.52 L721.02,470.34 L720.57,468.14 L720.17,465.94 L719.80,463.73 L719.48,461.51 L719.19,459.29 L718.94,457.06 L718.73,454.83 L718.55,452.60 L718.42,450.36 L718.33,448.12 L718.27,445.88 L718.26,443.64 L718.28,441.40 L718.34,439.16 L718.44,436.93 L718.58,434.69 L718.76,432.46 L718.98,430.23 L719.24,428.00 L719.53,425.78 L719.87,423.57 L720.24,421.36 L720.65,419.15 L721.10,416.96 L721.59,414.77 L722.11,412.59 L722.68,410.43 L723.28,408.27 L723.92,406.12 L724.60,403.99 L725.31,401.86 L726.06,399.75 L726.85,397.65 L727.67,395.57 L728.53,393.50 L729.43,391.45 L730.36,389.41 L731.33,387.39 L732.33,385.39 L733.37,383.40"/><path d="M805.90,247.40 L802.35,245.62 L798.71,244.03 L795.00,242.63 L791.22,241.42 L787.38,240.40 L783.49,239.59 L779.57,238.98 L775.62,238.57 L771.66,238.36 L767.69,238.36 L763.72,238.56 L759.78,238.97 L755.85,239.58 L751.97,240.39 L748.13,241.40 L744.34,242.60 L740.63,244.00 L736.99,245.59 L733.44,247.36 L729.98,249.32 L726.63,251.45 L723.40,253.74 L720.28,256.21 L717.30,258.83 L714.46,261.60 L711.76,264.51 L709.21,267.56 L706.83,270.73 L704.61,274.03 L702.57,277.43 L700.70,280.93 L699.02,284.53 L697.52,288.21 L696.22,291.96 L695.11,295.77 L694.20,299.63 L693.49,303.54 L692.98,307.47 L692.67,311.43 L692.57,315.40 L692.67,319.37 L692.98,323.33 L693.49,327.26 L694.20,331.17 L695.11,335.03 L696.22,338.84 L697.52,342.59 L699.02,346.27 L700.70,349.87 L702.57,353.37 L704.61,356.77 L706.83,360.07 L709.21,363.24 L711.76,366.29 L714.46,369.20 L717.30,371.97 L720.28,374.59 L723.40,377.06 L726.63,379.35 L729.98,381.48 L733.44,383.44 L736.99,385.21 L740.63,386.80 L744.34,388.20 L748.13,389.40 L751.97,390.41 L755.85,391.22 L759.78,391.83 L763.72,392.24 L767.69,392.44 L771.66,392.44 L775.62,392.23 L779.57,391.82 L783.49,391.21 L787.38,390.40 L791.22,389.38 L795.00,388.17 L798.71,386.77 L802.35,385.18 L805.90,383.40"/><path d="M754.22,130.44 L752.44,132.88 L750.72,135.38 L749.06,137.91 L747.48,140.49 L745.96,143.10 L744.51,145.76 L743.13,148.45 L741.82,151.18 L740.58,153.95 L739.42,156.74 L738.33,159.56 L737.31,162.41 L736.37,165.29 L735.51,168.19 L734.72,171.11 L734.00,174.05 L733.37,177.01 L732.81,179.98 L732.33,182.97 L731.93,185.97 L731.61,188.98 L731.36,192.00 L731.20,195.02 L731.11,198.04 L731.11,201.07 L731.18,204.10 L731.33,207.12 L731.56,210.14 L731.87,213.15 L732.26,216.15 L732.73,219.14 L733.27,222.12 L733.90,225.08 L734.60,228.02 L735.37,230.95 L736.23,233.85 L737.16,236.73 L738.16,239.58 L739.24,242.41 L740.39,245.21 L741.62,247.98 L742.91,250.71 L744.28,253.41 L745.72,256.07 L747.23,258.70 L748.80,261.28 L750.45,263.82 L752.16,266.32 L753.93,268.77 L755.77,271.18 L757.67,273.53 L759.63,275.84 L761.65,278.09 L763.73,280.29 L765.86,282.44 L768.05,284.52 L770.30,286.55 L772.60,288.52 L774.94,290.43 L777.34,292.28"/><path d="M754.22,500.36 L752.44,497.92 L750.72,495.42 L749.06,492.89 L747.48,490.31 L745.96,487.70 L744.51,485.04 L743.13,482.35 L741.82,479.62 L740.58,476.85 L739.42,474.06 L738.33,471.24 L737.31,468.39 L736.37,465.51 L735.51,462.61 L734.72,459.69 L734.00,456.75 L733.37,453.79 L732.81,450.82 L732.33,447.83 L731.93,444.83 L731.61,441.82 L731.36,438.80 L731.20,435.78 L731.11,432.76 L731.11,429.73 L731.18,426.70 L731.33,423.68 L731.56,420.66 L731.87,417.65 L732.26,414.65 L732.73,411.66 L733.27,408.68 L733.90,405.72 L734.60,402.78 L735.37,399.85 L736.23,396.95 L737.16,394.07 L738.16,391.22 L739.24,388.39 L740.39,385.59 L741.62,382.82 L742.91,380.09 L744.28,377.39 L745.72,374.73 L747.23,372.10 L748.80,369.52 L750.45,366.98 L752.16,364.48 L753.93,362.03 L755.77,359.62 L757.67,357.27 L759.63,354.96 L761.65,352.71 L763.73,350.51 L765.86,348.36 L768.05,346.28 L770.30,344.25 L772.60,342.28 L774.94,340.37 L777.34,338.52"/><path d="M801.59,259.01 L799.05,258.50 L796.49,258.10 L793.92,257.82 L791.33,257.65 L788.74,257.60 L786.16,257.67 L783.57,257.85 L781.00,258.14 L778.44,258.55 L775.91,259.08 L773.40,259.72 L770.92,260.47 L768.48,261.33 L766.08,262.30 L763.72,263.37 L761.42,264.55 L759.17,265.83 L756.98,267.22 L754.85,268.69 L752.79,270.27 L750.81,271.93 L748.90,273.68 L747.07,275.51 L745.33,277.42 L743.67,279.41 L742.10,281.48 L740.63,283.61 L739.25,285.80 L737.98,288.05 L736.80,290.36 L735.74,292.72 L734.77,295.12 L733.92,297.57 L733.18,300.05 L732.54,302.56 L732.03,305.10 L731.62,307.65 L731.33,310.23 L731.16,312.81 L731.10,315.40 L731.16,317.99 L731.33,320.57 L731.62,323.15 L732.03,325.70 L732.54,328.24 L733.18,330.75 L733.92,333.23 L734.77,335.68 L735.74,338.08 L736.80,340.44 L737.98,342.75 L739.25,345.00 L740.63,347.19 L742.10,349.32 L743.67,351.39 L745.33,353.38 L747.07,355.29 L748.90,357.12 L750.81,358.87 L752.79,360.53 L754.85,362.11 L756.98,363.58 L759.17,364.97 L761.42,366.25 L763.72,367.43 L766.08,368.50 L768.48,369.47 L770.92,370.33 L773.40,371.08 L775.91,371.72 L778.44,372.25 L781.00,372.66 L783.57,372.95 L786.16,373.13 L788.74,373.20 L791.33,373.15 L793.92,372.98 L796.49,372.70 L799.05,372.30 L801.59,371.79"/><path d="M800.46,176.68 L798.86,177.91 L797.30,179.18 L795.77,180.50 L794.27,181.85 L792.81,183.24 L791.38,184.67 L790.00,186.14 L788.65,187.64 L787.34,189.18 L786.08,190.75 L784.85,192.35 L783.67,193.99 L782.53,195.65 L781.44,197.35 L780.39,199.07 L779.38,200.82 L778.42,202.59 L777.51,204.39 L776.65,206.22 L775.83,208.06 L775.06,209.93 L774.34,211.81 L773.67,213.71 L773.05,215.63 L772.48,217.57 L771.97,219.52 L771.50,221.48 L771.08,223.46 L770.72,225.44 L770.41,227.43 L770.15,229.44 L769.94,231.44 L769.79,233.45 L769.69,235.47 L769.64,237.49 L769.64,239.50 L769.70,241.52 L769.81,243.53 L769.97,245.55 L770.19,247.55 L770.45,249.55 L770.77,251.54 L771.15,253.53 L771.57,255.50 L772.04,257.46 L772.57,259.41 L773.15,261.34 L773.78,263.26 L774.45,265.16 L775.18,267.04 L775.96,268.90 L776.78,270.74 L777.65,272.56 L778.57,274.36 L779.54,276.13 L780.55,277.88 L781.61,279.59 L782.71,281.28 L783.86,282.94 L785.05,284.57"/><path d="M800.46,454.12 L798.86,452.89 L797.30,451.62 L795.77,450.30 L794.27,448.95 L792.81,447.56 L791.38,446.13 L790.00,444.66 L788.65,443.16 L787.34,441.62 L786.08,440.05 L784.85,438.45 L783.67,436.81 L782.53,435.15 L781.44,433.45 L780.39,431.73 L779.38,429.98 L778.42,428.21 L777.51,426.41 L776.65,424.58 L775.83,422.74 L775.06,420.87 L774.34,418.99 L773.67,417.09 L773.05,415.17 L772.48,413.23 L771.97,411.28 L771.50,409.32 L771.08,407.34 L770.72,405.36 L770.41,403.37 L770.15,401.36 L769.94,399.36 L769.79,397.35 L769.69,395.33 L769.64,393.31 L769.64,391.30 L769.70,389.28 L769.81,387.27 L769.97,385.25 L770.19,383.25 L770.45,381.25 L770.77,379.26 L771.15,377.27 L771.57,375.30 L772.04,373.34 L772.57,371.39 L773.15,369.46 L773.78,367.54 L774.45,365.64 L775.18,363.76 L775.96,361.90 L776.78,360.06 L777.65,358.24 L778.57,356.44 L779.54,354.67 L780.55,352.92 L781.61,351.21 L782.71,349.52 L783.86,347.86 L785.05,346.23"/><path d="M800.46,269.16 L798.64,269.20 L796.83,269.30 L795.03,269.48 L793.23,269.73 L791.44,270.05 L789.67,270.44 L787.91,270.90 L786.17,271.42 L784.46,272.02 L782.76,272.68 L781.10,273.41 L779.47,274.20 L777.87,275.06 L776.30,275.97 L774.77,276.95 L773.28,277.99 L771.83,279.09 L770.43,280.24 L769.07,281.44 L767.76,282.70 L766.50,284.01 L765.30,285.37 L764.15,286.77 L763.05,288.22 L762.01,289.71 L761.03,291.24 L760.12,292.81 L759.26,294.41 L758.47,296.04 L757.74,297.70 L757.08,299.40 L756.48,301.11 L755.96,302.85 L755.50,304.61 L755.11,306.38 L754.79,308.17 L754.54,309.97 L754.36,311.77 L754.26,313.58 L754.22,315.40 L754.26,317.22 L754.36,319.03 L754.54,320.83 L754.79,322.63 L755.11,324.42 L755.50,326.19 L755.96,327.95 L756.48,329.69 L757.08,331.40 L757.74,333.10 L758.47,334.76 L759.26,336.39 L760.12,337.99 L761.03,339.56 L762.01,341.09 L763.05,342.58 L764.15,344.03 L765.30,345.43 L766.50,346.79 L767.76,348.10 L769.07,349.36 L770.43,350.56 L771.83,351.71 L773.28,352.81 L774.77,353.85 L776.30,354.83 L777.87,355.74 L779.47,356.60 L781.10,357.39 L782.76,358.12 L784.46,358.78 L786.17,359.38 L787.91,359.90 L789.67,360.36 L791.44,360.75 L793.23,361.07 L795.03,361.32 L796.83,361.50 L798.64,361.60 L800.46,361.64"/><path d="M819.50,206.60 L818.25,207.28 L817.03,208.00 L815.81,208.74 L814.62,209.52 L813.45,210.32 L812.30,211.15 L811.17,212.01 L810.06,212.90 L808.97,213.82 L807.90,214.76 L806.86,215.72 L805.84,216.72 L804.85,217.73 L803.88,218.77 L802.94,219.84 L802.02,220.93 L801.14,222.04 L800.28,223.17 L799.44,224.32 L798.64,225.49 L797.86,226.68 L797.12,227.89 L796.40,229.12 L795.72,230.37 L795.06,231.63 L794.44,232.91 L793.85,234.20 L793.29,235.51 L792.76,236.83 L792.27,238.16 L791.81,239.50 L791.38,240.86 L790.98,242.23 L790.62,243.60 L790.29,244.98 L790.00,246.37 L789.74,247.77 L789.52,249.18 L789.33,250.58 L789.17,252.00 L789.05,253.41 L788.97,254.83 L788.92,256.25 L788.90,257.67 L788.92,259.10 L788.97,260.52 L789.06,261.94 L789.19,263.35 L789.35,264.76 L789.54,266.17 L789.77,267.58 L790.03,268.97 L790.33,270.36 L790.66,271.74 L791.02,273.12 L791.42,274.48 L791.85,275.84 L792.32,277.18 L792.82,278.51 L793.35,279.83"/><path d="M819.50,424.20 L818.25,423.52 L817.03,422.80 L815.81,422.06 L814.62,421.28 L813.45,420.48 L812.30,419.65 L811.17,418.79 L810.06,417.90 L808.97,416.98 L807.90,416.04 L806.86,415.08 L805.84,414.08 L804.85,413.07 L803.88,412.03 L802.94,410.96 L802.02,409.87 L801.14,408.76 L800.28,407.63 L799.44,406.48 L798.64,405.31 L797.86,404.12 L797.12,402.91 L796.40,401.68 L795.72,400.43 L795.06,399.17 L794.44,397.89 L793.85,396.60 L793.29,395.29 L792.76,393.97 L792.27,392.64 L791.81,391.30 L791.38,389.94 L790.98,388.57 L790.62,387.20 L790.29,385.82 L790.00,384.43 L789.74,383.03 L789.52,381.62 L789.33,380.22 L789.17,378.80 L789.05,377.39 L788.97,375.97 L788.92,374.55 L788.90,373.13 L788.92,371.70 L788.97,370.28 L789.06,368.86 L789.19,367.45 L789.35,366.04 L789.54,364.63 L789.77,363.22 L790.03,361.83 L790.33,360.44 L790.66,359.06 L791.02,357.68 L791.42,356.32 L791.85,354.96 L792.32,353.62 L792.82,352.29 L793.35,350.97"/><path d="M801.22,277.50 L799.91,277.76 L798.60,278.07 L797.31,278.43 L796.04,278.83 L794.77,279.27 L793.53,279.76 L792.30,280.29 L791.09,280.86 L789.90,281.47 L788.73,282.13 L787.59,282.82 L786.47,283.56 L785.37,284.33 L784.31,285.14 L783.27,285.99 L782.27,286.87 L781.29,287.79 L780.35,288.74 L779.44,289.72 L778.56,290.73 L777.73,291.77 L776.92,292.85 L776.16,293.94 L775.43,295.07 L774.75,296.22 L774.10,297.39 L773.50,298.58 L772.93,299.80 L772.41,301.03 L771.93,302.28 L771.50,303.55 L771.11,304.83 L770.77,306.12 L770.47,307.43 L770.21,308.74 L770.00,310.06 L769.84,311.39 L769.73,312.73 L769.66,314.06 L769.63,315.40 L769.66,316.74 L769.73,318.07 L769.84,319.41 L770.00,320.74 L770.21,322.06 L770.47,323.37 L770.77,324.68 L771.11,325.97 L771.50,327.25 L771.93,328.52 L772.41,329.77 L772.93,331.00 L773.50,332.22 L774.10,333.41 L774.75,334.58 L775.43,335.73 L776.16,336.86 L776.92,337.95 L777.73,339.03 L778.56,340.07 L779.44,341.08 L780.35,342.06 L781.29,343.01 L782.27,343.93 L783.27,344.81 L784.31,345.66 L785.37,346.47 L786.47,347.24 L787.59,347.98 L788.73,348.67 L789.90,349.33 L791.09,349.94 L792.30,350.51 L793.53,351.04 L794.77,351.53 L796.04,351.97 L797.31,352.37 L798.60,352.73 L799.91,353.04 L801.22,353.30"/><path d="M828.92,226.48 L827.95,226.89 L827.00,227.32 L826.06,227.78 L825.13,228.26 L824.21,228.76 L823.30,229.28 L822.41,229.82 L821.52,230.38 L820.65,230.95 L819.79,231.55 L818.95,232.17 L818.12,232.81 L817.31,233.46 L816.51,234.14 L815.72,234.83 L814.95,235.54 L814.20,236.27 L813.47,237.01 L812.75,237.77 L812.05,238.55 L811.36,239.34 L810.70,240.15 L810.05,240.97 L809.42,241.80 L808.81,242.65 L808.22,243.52 L807.65,244.39 L807.10,245.28 L806.57,246.19 L806.06,247.10 L805.57,248.02 L805.11,248.96 L804.66,249.91 L804.23,250.86 L803.83,251.83 L803.45,252.80 L803.09,253.78 L802.75,254.77 L802.44,255.77 L802.15,256.78 L801.88,257.79 L801.63,258.80 L801.41,259.83 L801.21,260.85 L801.04,261.88 L800.88,262.92 L800.75,263.96 L800.65,265.00 L800.57,266.04 L800.51,267.08 L800.47,268.13 L800.46,269.18 L800.47,270.22 L800.51,271.27 L800.57,272.31 L800.65,273.35 L800.76,274.39 L800.89,275.43 L801.04,276.47 L801.22,277.50"/><path d="M828.92,404.32 L827.95,403.91 L827.00,403.48 L826.06,403.02 L825.13,402.54 L824.21,402.04 L823.30,401.52 L822.41,400.98 L821.52,400.42 L820.65,399.85 L819.79,399.25 L818.95,398.63 L818.12,397.99 L817.31,397.34 L816.51,396.66 L815.72,395.97 L814.95,395.26 L814.20,394.53 L813.47,393.79 L812.75,393.03 L812.05,392.25 L811.36,391.46 L810.70,390.65 L810.05,389.83 L809.42,389.00 L808.81,388.15 L808.22,387.28 L807.65,386.41 L807.10,385.52 L806.57,384.61 L806.06,383.70 L805.57,382.78 L805.11,381.84 L804.66,380.89 L804.23,379.94 L803.83,378.97 L803.45,378.00 L803.09,377.02 L802.75,376.03 L802.44,375.03 L802.15,374.02 L801.88,373.01 L801.63,372.00 L801.41,370.97 L801.21,369.95 L801.04,368.92 L800.88,367.88 L800.75,366.84 L800.65,365.80 L800.57,364.76 L800.51,363.72 L800.47,362.67 L800.46,361.62 L800.47,360.58 L800.51,359.53 L800.57,358.49 L800.65,357.45 L800.76,356.41 L800.89,355.37 L801.04,354.33 L801.22,353.30"/><path d="M844.76,306.58 L844.12,305.31 L843.39,304.08 L842.59,302.91 L841.70,301.80 L840.75,300.74 L839.72,299.76 L838.63,298.84 L837.48,298.01 L836.28,297.25 L835.02,296.57 L833.73,295.98 L832.40,295.48 L831.03,295.07 L829.65,294.76 L828.24,294.54 L826.82,294.41 L825.40,294.38 L823.98,294.45 L822.57,294.61 L821.17,294.87 L819.79,295.23 L818.44,295.67 L817.12,296.21 L815.84,296.83 L814.60,297.54 L813.42,298.33 L812.29,299.20 L811.23,300.14 L810.23,301.15 L809.30,302.23 L808.45,303.37 L807.67,304.56 L806.98,305.81 L806.37,307.09 L805.86,308.42 L805.43,309.78 L805.10,311.16 L804.86,312.56 L804.71,313.98 L804.66,315.40 L804.71,316.82 L804.86,318.24 L805.10,319.64 L805.43,321.02 L805.86,322.38 L806.37,323.71 L806.98,324.99 L807.67,326.24 L808.45,327.43 L809.30,328.57 L810.23,329.65 L811.23,330.66 L812.29,331.60 L813.42,332.47 L814.60,333.26 L815.84,333.97 L817.12,334.59 L818.44,335.13 L819.79,335.57 L821.17,335.93 L822.57,336.19 L823.98,336.35 L825.40,336.42 L826.82,336.39 L828.24,336.26 L829.65,336.04 L831.03,335.73 L832.40,335.32 L833.73,334.82 L835.02,334.23 L836.28,333.55 L837.48,332.79 L838.63,331.96 L839.72,331.04 L840.75,330.06 L841.70,329.00 L842.59,327.89 L843.39,326.72 L844.12,325.49 L844.76,324.22"/><path d="M842.12,269.62 L841.16,269.83 L840.21,270.09 L839.27,270.39 L838.35,270.72 L837.44,271.10 L836.54,271.51 L835.67,271.96 L834.81,272.45 L833.98,272.97 L833.17,273.53 L832.38,274.13 L831.62,274.75 L830.89,275.41 L830.19,276.10 L829.51,276.82 L828.87,277.56 L828.26,278.33 L827.68,279.13 L827.14,279.95 L826.63,280.80 L826.16,281.66 L825.73,282.54 L825.33,283.45 L824.98,284.36 L824.66,285.30 L824.38,286.24 L824.15,287.20 L823.95,288.16 L823.80,289.13 L823.68,290.11 L823.61,291.09 L823.58,292.08 L823.59,293.06 L823.65,294.04 L823.74,295.02 L823.88,296.00 L824.06,296.97 L824.28,297.93 L824.54,298.88 L824.84,299.81 L825.18,300.74 L825.56,301.65 L825.98,302.54 L826.43,303.41 L826.93,304.26 L827.46,305.09 L828.02,305.90 L828.61,306.68 L829.24,307.44 L829.91,308.17 L830.60,308.87 L831.32,309.54 L832.07,310.18 L832.84,310.79 L833.64,311.36 L834.47,311.90 L835.31,312.40 L836.18,312.87 L837.07,313.30 L837.97,313.69"/><path d="M842.12,361.18 L841.16,360.97 L840.21,360.71 L839.27,360.41 L838.35,360.08 L837.44,359.70 L836.54,359.29 L835.67,358.84 L834.81,358.35 L833.98,357.83 L833.17,357.27 L832.38,356.67 L831.62,356.05 L830.89,355.39 L830.19,354.70 L829.51,353.98 L828.87,353.24 L828.26,352.47 L827.68,351.67 L827.14,350.85 L826.63,350.00 L826.16,349.14 L825.73,348.26 L825.33,347.35 L824.98,346.44 L824.66,345.50 L824.38,344.56 L824.15,343.60 L823.95,342.64 L823.80,341.67 L823.68,340.69 L823.61,339.71 L823.58,338.72 L823.59,337.74 L823.65,336.76 L823.74,335.78 L823.88,334.80 L824.06,333.83 L824.28,332.87 L824.54,331.92 L824.84,330.99 L825.18,330.06 L825.56,329.15 L825.98,328.26 L826.43,327.39 L826.93,326.54 L827.46,325.71 L828.02,324.90 L828.61,324.12 L829.24,323.36 L829.91,322.63 L830.60,321.93 L831.32,321.26 L832.07,320.62 L832.84,320.01 L833.64,319.44 L834.47,318.90 L835.31,318.40 L836.18,317.93 L837.07,317.50 L837.97,317.11"/><path d="M843.40,307.54 L842.92,307.10 L842.43,306.69 L841.90,306.31 L841.36,305.96 L840.80,305.65 L840.22,305.36 L839.62,305.12 L839.01,304.90 L838.39,304.73 L837.76,304.59 L837.12,304.48 L836.48,304.42 L835.83,304.39 L835.19,304.40 L834.54,304.45 L833.90,304.54 L833.27,304.66 L832.64,304.82 L832.03,305.02 L831.43,305.25 L830.84,305.52 L830.27,305.82 L829.72,306.15 L829.18,306.52 L828.67,306.92 L828.19,307.34 L827.73,307.79 L827.30,308.27 L826.89,308.78 L826.52,309.31 L826.18,309.85 L825.87,310.42 L825.60,311.01 L825.36,311.60 L825.15,312.22 L824.98,312.84 L824.85,313.47 L824.76,314.11 L824.70,314.75 L824.68,315.40 L824.70,316.05 L824.76,316.69 L824.85,317.33 L824.98,317.96 L825.15,318.58 L825.36,319.20 L825.60,319.79 L825.87,320.38 L826.18,320.95 L826.52,321.49 L826.89,322.02 L827.30,322.53 L827.73,323.01 L828.19,323.46 L828.67,323.88 L829.18,324.28 L829.72,324.65 L830.27,324.98 L830.84,325.28 L831.43,325.55 L832.03,325.78 L832.64,325.98 L833.27,326.14 L833.90,326.26 L834.54,326.35 L835.19,326.40 L835.83,326.41 L836.48,326.38 L837.12,326.32 L837.76,326.21 L838.39,326.07 L839.01,325.90 L839.62,325.68 L840.22,325.44 L840.80,325.15 L841.36,324.84 L841.90,324.49 L842.43,324.11 L842.92,323.70 L843.40,323.26"/><path d="M845.55,292.34 L845.11,292.39 L844.67,292.46 L844.24,292.55 L843.81,292.65 L843.38,292.77 L842.96,292.90 L842.55,293.05 L842.14,293.22 L841.73,293.40 L841.34,293.60 L840.95,293.81 L840.57,294.04 L840.20,294.28 L839.84,294.53 L839.49,294.80 L839.15,295.09 L838.82,295.38 L838.50,295.69 L838.20,296.01 L837.90,296.34 L837.62,296.68 L837.36,297.03 L837.10,297.39 L836.86,297.77 L836.64,298.15 L836.43,298.54 L836.23,298.93 L836.05,299.34 L835.89,299.75 L835.74,300.16 L835.61,300.58 L835.49,301.01 L835.39,301.44 L835.31,301.87 L835.24,302.31 L835.19,302.75 L835.16,303.19 L835.14,303.63 L835.14,304.08 L835.16,304.52 L835.19,304.96 L835.25,305.40 L835.31,305.83 L835.40,306.27 L835.50,306.70 L835.62,307.12 L835.75,307.55 L835.90,307.96 L836.06,308.37 L836.25,308.77 L836.44,309.17 L836.65,309.56 L836.88,309.94 L837.12,310.31 L837.37,310.67 L837.64,311.02 L837.92,311.36 L838.22,311.69 L838.52,312.01 L838.84,312.32"/><path d="M845.55,338.46 L845.11,338.41 L844.67,338.34 L844.24,338.25 L843.81,338.15 L843.38,338.03 L842.96,337.90 L842.55,337.75 L842.14,337.58 L841.73,337.40 L841.34,337.20 L840.95,336.99 L840.57,336.76 L840.20,336.52 L839.84,336.27 L839.49,336.00 L839.15,335.71 L838.82,335.42 L838.50,335.11 L838.20,334.79 L837.90,334.46 L837.62,334.12 L837.36,333.77 L837.10,333.41 L836.86,333.03 L836.64,332.65 L836.43,332.26 L836.23,331.87 L836.05,331.46 L835.89,331.05 L835.74,330.64 L835.61,330.22 L835.49,329.79 L835.39,329.36 L835.31,328.93 L835.24,328.49 L835.19,328.05 L835.16,327.61 L835.14,327.17 L835.14,326.72 L835.16,326.28 L835.19,325.84 L835.25,325.40 L835.31,324.97 L835.40,324.53 L835.50,324.10 L835.62,323.68 L835.75,323.25 L835.90,322.84 L836.06,322.43 L836.25,322.03 L836.44,321.63 L836.65,321.24 L836.88,320.86 L837.12,320.49 L837.37,320.13 L837.64,319.78 L837.92,319.44 L838.22,319.11 L838.52,318.79 L838.84,318.48"/><path d="M842.08,310.87 L841.90,310.87 L841.73,310.89 L841.55,310.91 L841.38,310.94 L841.21,310.97 L841.03,311.01 L840.87,311.06 L840.70,311.11 L840.53,311.17 L840.37,311.24 L840.21,311.31 L840.05,311.39 L839.90,311.47 L839.75,311.57 L839.60,311.66 L839.46,311.76 L839.32,311.87 L839.19,311.99 L839.05,312.10 L838.93,312.23 L838.81,312.35 L838.69,312.49 L838.58,312.62 L838.48,312.76 L838.38,312.91 L838.29,313.06 L838.20,313.21 L838.12,313.37 L838.04,313.52 L837.97,313.69 L837.91,313.85 L837.85,314.02 L837.80,314.18 L837.76,314.35 L837.72,314.53 L837.69,314.70 L837.66,314.87 L837.65,315.05 L837.64,315.22 L837.63,315.40 L837.64,315.58 L837.65,315.75 L837.66,315.93 L837.69,316.10 L837.72,316.27 L837.76,316.45 L837.80,316.62 L837.85,316.78 L837.91,316.95 L837.97,317.11 L838.04,317.28 L838.12,317.43 L838.20,317.59 L838.29,317.74 L838.38,317.89 L838.48,318.04 L838.58,318.18 L838.69,318.31 L838.81,318.45 L838.93,318.57 L839.05,318.70 L839.19,318.81 L839.32,318.93 L839.46,319.04 L839.60,319.14 L839.75,319.23 L839.90,319.33 L840.05,319.41 L840.21,319.49 L840.37,319.56 L840.53,319.63 L840.70,319.69 L840.87,319.74 L841.03,319.79 L841.21,319.83 L841.38,319.86 L841.55,319.89 L841.73,319.91 L841.90,319.93 L842.08,319.93"/><path d="M846.52,306.16 L846.40,306.16 L846.28,306.17 L846.16,306.18 L846.04,306.20 L845.92,306.22 L845.80,306.24 L845.69,306.26 L845.57,306.29 L845.46,306.32 L845.34,306.36 L845.23,306.39 L845.11,306.43 L845.00,306.47 L844.89,306.52 L844.78,306.57 L844.67,306.62 L844.57,306.67 L844.46,306.73 L844.36,306.79 L844.26,306.85 L844.16,306.92 L844.06,306.98 L843.96,307.05 L843.86,307.12 L843.77,307.20 L843.68,307.28 L843.59,307.35 L843.50,307.44 L843.42,307.52 L843.33,307.61 L843.25,307.69 L843.17,307.78 L843.10,307.88 L843.02,307.97 L842.95,308.07 L842.88,308.16 L842.82,308.26 L842.75,308.36 L842.69,308.47 L842.64,308.57 L842.58,308.68 L842.53,308.78 L842.48,308.89 L842.43,309.00 L842.39,309.11 L842.34,309.23 L842.31,309.34 L842.27,309.45 L842.24,309.57 L842.21,309.68 L842.18,309.80 L842.16,309.92 L842.14,310.03 L842.12,310.15 L842.10,310.27 L842.09,310.39 L842.08,310.51 L842.08,310.63 L842.08,310.75 L842.08,310.87"/><path d="M846.52,324.64 L846.40,324.64 L846.28,324.63 L846.16,324.62 L846.04,324.60 L845.92,324.58 L845.80,324.56 L845.69,324.54 L845.57,324.51 L845.46,324.48 L845.34,324.44 L845.23,324.41 L845.11,324.37 L845.00,324.33 L844.89,324.28 L844.78,324.23 L844.67,324.18 L844.57,324.13 L844.46,324.07 L844.36,324.01 L844.26,323.95 L844.16,323.88 L844.06,323.82 L843.96,323.75 L843.86,323.68 L843.77,323.60 L843.68,323.52 L843.59,323.45 L843.50,323.36 L843.42,323.28 L843.33,323.19 L843.25,323.11 L843.17,323.02 L843.10,322.92 L843.02,322.83 L842.95,322.73 L842.88,322.64 L842.82,322.54 L842.75,322.44 L842.69,322.33 L842.64,322.23 L842.58,322.12 L842.53,322.02 L842.48,321.91 L842.43,321.80 L842.39,321.69 L842.34,321.57 L842.31,321.46 L842.27,321.35 L842.24,321.23 L842.21,321.12 L842.18,321.00 L842.16,320.88 L842.14,320.77 L842.12,320.65 L842.10,320.53 L842.09,320.41 L842.08,320.29 L842.08,320.17 L842.08,320.05 L842.08,319.93"/></g>
<line x1="384.3" y1="315.4" x2="846.7" y2="315.4" stroke="#787878" stroke-width="1.2"/>
<circle cx="615.5" cy="315.4" r="231.2" fill="none" stroke="#8c8c8c" stroke-width="1.2"/>
<g font-family="Liberation Sans, sans-serif" font-size="9" fill="#737373" text-anchor="middle" dominant-baseline="central">
<text transform="translate(455.37,306.60) rotate(-90.0)">0.2</text>
<text transform="translate(510.41,306.60) rotate(-90.0)">0.4</text>
<text transform="translate(551.70,306.60) rotate(-90.0)">0.5</text>
<text transform="translate(583.81,306.60) rotate(-90.0)">0.8</text>
<text transform="translate(609.50,306.60) rotate(-90.0)">1.0</text>
<text transform="translate(686.57,306.60) rotate(-90.0)">2.0</text>
<text transform="translate(763.63,306.60) rotate(-90.0)">5.0</text>
<text transform="translate(798.66,306.60) rotate(-90.0)">10</text>
<text transform="translate(831.63,306.60) rotate(-90.0)">50</text>
<text transform="translate(407.90,395.40) rotate(-22.6)">0.2</text>
<text transform="translate(407.90,235.40) rotate(202.6)">0.2</text>
<text transform="translate(450.31,464.43) rotate(-43.6)">0.4</text>
<text transform="translate(450.31,166.37) rotate(223.6)">0.4</text>
<text transform="translate(505.55,508.81) rotate(-61.9)">0.6</text>
<text transform="translate(505.55,121.99) rotate(241.9)">0.6</text>
<text transform="translate(560.83,531.06) rotate(-77.3)">0.8</text>
<text transform="translate(560.83,99.74) rotate(257.3)">0.8</text>
<text transform="translate(609.50,537.80) rotate(-90.0)">1.0</text>
<text transform="translate(609.50,93.00) rotate(270.0)">1.0</text>
<text transform="translate(744.14,496.92) rotate(-126.9)">2.0</text>
<text transform="translate(744.14,133.88) rotate(306.9)">2.0</text>
<text transform="translate(818.48,406.48) rotate(-153.4)">5.0</text>
<text transform="translate(818.48,224.32) rotate(333.4)">5.0</text>
<text transform="translate(832.31,365.32) rotate(-158.6)">10</text>
<text transform="translate(832.31,265.48) rotate(338.6)">10</text>
<text transform="translate(837.48,330.29) rotate(-177.7)">50</text>
<text transform="translate(837.48,300.51) rotate(357.7)">50</text>
<text transform="translate(625.23,330.67) rotate(-11.4)">0.2</text>
<text transform="translate(625.23,300.13) rotate(191.4)">0.2</text>
<text transform="translate(630.21,350.94) rotate(-22.6)">0.4</text>
<text transform="translate(630.21,279.86) rotate(202.6)">0.4</text>
<text transform="translate(638.63,369.18) rotate(-33.4)">0.6</text>
<text transform="translate(638.63,261.62) rotate(213.4)">0.6</text>
<text transform="translate(649.62,384.71) rotate(-43.6)">0.8</text>
<text transform="translate(649.62,246.09) rotate(223.6)">0.8</text>
<text transform="translate(662.22,397.24) rotate(-53.1)">1.0</text>
<text transform="translate(662.22,233.56) rotate(233.1)">1.0</text>
<text transform="translate(626.86,118.40) rotate(-10.4)">0.2</text>
<text transform="translate(626.86,512.40) rotate(190.4)">0.2</text>
<text transform="translate(634.38,150.65) rotate(-18.9)">0.4</text>
<text transform="translate(634.38,480.15) rotate(198.9)">0.4</text>
<text transform="translate(644.16,176.26) rotate(-26.0)">0.6</text>
<text transform="translate(644.16,454.54) rotate(206.0)">0.6</text>
<text transform="translate(654.70,196.60) rotate(-31.9)">0.8</text>
<text transform="translate(654.70,434.20) rotate(211.9)">0.8</text>
<text transform="translate(665.18,212.84) rotate(-36.9)">1.0</text>
<text transform="translate(665.18,417.96) rotate(216.9)">1.0</text>
</g>
<circle cx="615.5" cy="315.4" r="4" fill="none" stroke="#8a8a8a" stroke-width="0.8"/>
<path d="M411.20,281.81 L416.19,249.48 L419.97,234.41 L439.92,200.96 L458.80,172.35 L477.13,154.27 L494.61,139.66 L514.13,126.97 L534.08,119.49 L555.85,110.61 L586.13,102.87 L616.45,101.56 L653.63,103.67 L682.11,111.11 L714.08,123.30 L736.98,134.25 L762.98,156.12 L788.96,184.66 L802.67,206.68 L815.89,234.72 L821.26,247.42 L828.26,279.27 L830.88,315.26 L828.26,349.40 L821.40,374.86 L817.19,387.31 L804.75,414.15 L789.23,440.80 L771.81,459.16 L742.29,485.40 L715.14,500.95 L687.16,511.99 L660.51,520.85 L617.52,524.78 L588.30,523.07 L555.85,513.73 L532.05,505.67 L514.72,498.07 L492.00,483.02 L471.44,466.38 L457.36,451.77 L442.95,429.06 L428.86,405.65 L418.26,383.75 L411.34,354.68 L406.26,317.90 Z" fill="none" stroke="#56e6e8" stroke-width="2" stroke-linejoin="round"/>
<path d="M428.99,285.74 L437.99,245.03 L455.57,207.29 L470.84,184.70 L487.75,167.47 L504.91,152.93 L521.87,141.46 L537.95,135.09 L556.47,126.12 L588.54,116.63 L618.48,114.40 L649.71,114.03 L673.29,121.76 L713.57,136.54 L741.26,154.05 L762.75,172.85 L781.87,194.80 L794.65,216.79 L807.49,245.31 L817.45,279.35 L819.85,316.30 L816.40,354.54 L807.61,383.88 L796.41,406.98 L778.99,433.05 L762.07,451.40 L739.08,469.30 L715.40,483.18 L691.07,492.76 L659.86,503.29 L624.63,505.82 L589.19,503.43 L555.29,493.62 L526.91,481.63 L506.49,467.36 L489.06,452.75 L471.76,435.45 L453.94,406.49 L440.78,383.79 L432.45,354.67 L426.63,318.12 Z" fill="none" stroke="#6262ea" stroke-width="2" stroke-linejoin="round"/>
<path d="M448.88,298.55 L455.62,258.80 L461.40,243.39 L473.06,221.28 L485.52,199.43 L501.78,183.30 L515.69,170.92 L531.99,158.02 L555.54,145.96 L586.38,134.98 L618.90,131.41 L656.63,132.66 L686.68,139.70 L715.46,150.77 L744.19,173.92 L769.53,199.87 L783.57,223.63 L792.85,246.08 L801.78,279.27 L804.32,315.80 L799.29,354.85 L789.11,386.34 L780.42,402.27 L764.11,424.23 L744.58,442.51 L714.28,463.08 L675.03,478.44 L647.40,485.24 L622.56,485.64 L591.16,482.24 L556.73,470.67 L538.07,461.95 L523.14,451.54 L507.35,439.41 L490.71,423.68 L476.74,404.16 L461.27,375.31 L455.55,353.76 L448.88,320.62 Z" fill="none" stroke="#ea62ea" stroke-width="2" stroke-linejoin="round"/>
<path d="M477.41,266.34 L486.62,243.38 L499.57,214.80 L514.18,197.85 L530.83,185.45 L545.10,173.20 L557.67,166.59 L593.15,152.49 L623.65,147.74 L655.77,148.63 L684.33,156.94 L713.85,169.26 L732.60,183.24 L759.07,211.11 L776.35,243.64 L788.33,270.79 L791.55,314.70 L787.12,349.08 L777.12,371.43 L768.33,386.99 L749.80,413.12 L730.52,429.80 L715.06,440.99 L696.40,451.58 L670.79,460.58 L644.62,465.55 L620.49,464.77 L593.93,460.82 L556.87,445.50 L536.63,431.92 L520.59,418.47 L504.43,400.73 L482.45,360.37 L473.15,313.06 Z" fill="none" stroke="#62aeec" stroke-width="2" stroke-linejoin="round"/>
<path d="M501.53,275.07 L511.76,246.21 L518.55,230.43 L534.45,212.44 L553.26,193.84 L592.41,172.97 L620.44,167.91 L644.58,166.30 L661.93,170.53 L691.10,182.50 L714.69,193.48 L731.08,205.57 L744.63,220.84 L758.53,245.34 L769.90,278.21 L771.24,324.79 L763.16,356.75 L754.95,373.69 L745.56,385.95 L733.28,401.18 L714.14,415.50 L684.47,431.26 L657.33,438.99 L627.48,442.35 L589.44,435.95 L556.65,415.45 L540.39,401.96 L519.25,377.39 L508.43,353.86 L499.31,315.81 Z" fill="none" stroke="#ea62ae" stroke-width="2" stroke-linejoin="round"/>
<path d="M529.88,280.44 L535.14,256.91 L546.73,239.57 L565.65,219.18 L595.31,199.45 L630.41,190.45 L659.71,192.70 L684.29,203.00 L709.68,218.37 L727.70,233.73 L737.07,246.71 L747.53,277.03 L749.07,315.04 L741.78,349.30 L730.92,372.87 L713.73,386.05 L683.24,405.46 L664.52,411.73 L639.10,415.20 L613.66,413.43 L596.06,407.48 L574.72,394.36 L554.30,372.86 L535.08,340.90 L528.86,314.74 Z" fill="none" stroke="#eab46a" stroke-width="2" stroke-linejoin="round"/>
<path d="M563.82,299.59 L564.16,289.14 L565.86,278.78 L568.90,268.68 L573.28,259.03 L578.95,250.04 L585.83,241.89 L593.79,234.77 L602.69,228.84 L612.33,224.25 L622.50,221.08 L632.97,219.38 L643.53,219.14 L653.97,220.33 L664.09,222.86 L673.76,226.63 L682.83,231.53 L691.21,237.45 L698.83,244.30 L705.59,251.98 L711.42,260.40 L716.24,269.48 L719.95,279.12 L722.44,289.20 L723.62,299.59 L723.42,310.11 L721.78,320.56 L718.68,330.72 L714.17,340.38 L708.33,349.31 L701.28,357.34 L693.17,364.28 L684.19,370.02 L674.54,374.45 L664.42,377.54 L654.02,379.25 L643.53,379.59 L633.13,378.58 L622.99,376.28 L613.24,372.72 L604.05,367.98 L595.54,362.14 L587.83,355.30 L581.03,347.55 L575.25,339.01 L570.57,329.81 L567.07,320.08 L564.80,309.96 Z" fill="none" stroke="#00da7a" stroke-width="4" stroke-linejoin="round"/>
<rect x="639" y="305" width="2" height="2" fill="#a040ff"/>
</svg>
</body></html>
